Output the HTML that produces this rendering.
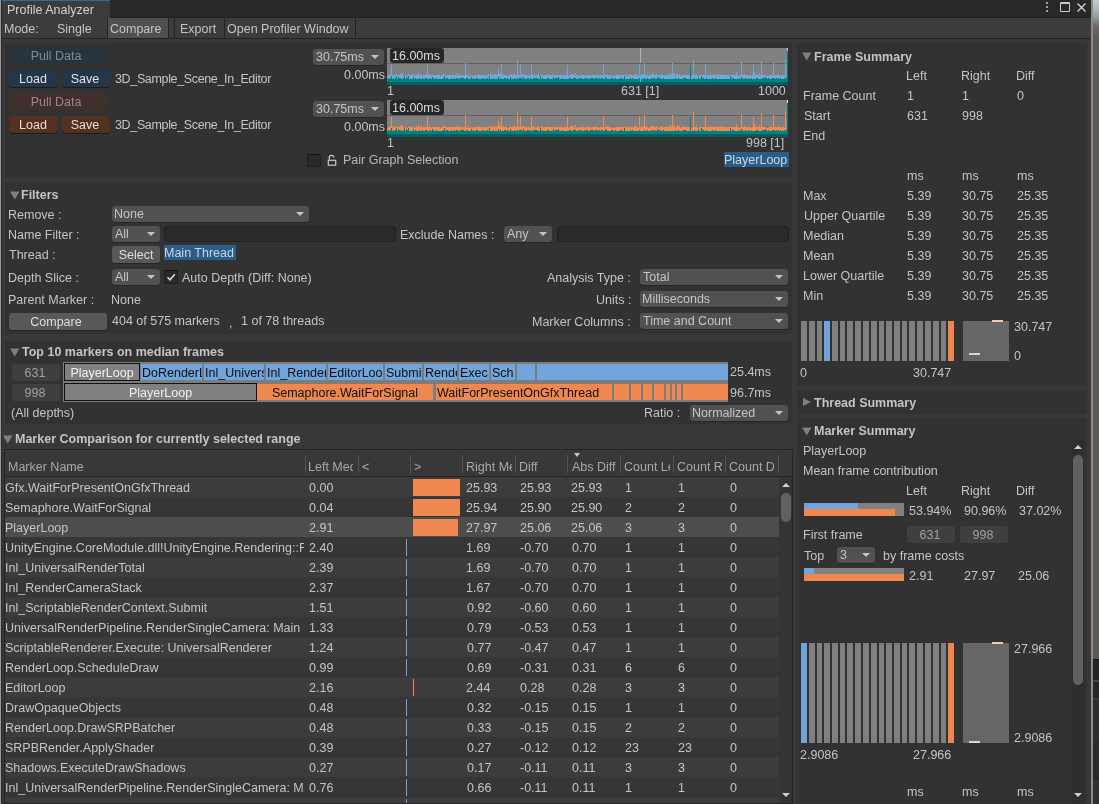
<!DOCTYPE html>
<html><head><meta charset="utf-8"><style>
html,body{margin:0;padding:0;}
body{width:1099px;height:804px;overflow:hidden;position:relative;background:#383838;font-family:"Liberation Sans",sans-serif;font-size:12.5px;}
body>div{position:absolute;}
.t{white-space:nowrap;line-height:14px;height:14px;will-change:transform;}
.seg{overflow:hidden;white-space:nowrap;box-sizing:border-box;will-change:transform;}
</style></head><body>
<div style="left:0px;top:0px;width:1091px;height:18px;background:#282828;"></div>
<div style="left:0px;top:17px;width:1091px;height:1px;background:#1f1f1f;"></div>
<div style="left:2px;top:0px;width:108px;height:18px;background:#3c3c3c;"></div>
<div style="left:2px;top:0px;width:108px;height:1px;background:#2f68a6;"></div>
<div class="t" style="left:6.97px;top:2.67px;color:#d2d2d2;">Profile Analyzer</div>
<div style="left:1046px;top:2px;width:2px;height:2px;background:#c8c8c8;border-radius:1px"></div>
<div style="left:1046px;top:6px;width:2px;height:2px;background:#c8c8c8;border-radius:1px"></div>
<div style="left:1046px;top:10px;width:2px;height:2px;background:#c8c8c8;border-radius:1px"></div>
<div style="left:1060px;top:2px;width:10px;height:10px;background:transparent;box-sizing:border-box;border:1px solid #c8c8c8;border-top-width:2px;border-radius:1px"></div>
<svg style="position:absolute;left:1076px;top:2px" width="11" height="11"><path d="M1.5 1.5L9.5 9.5M9.5 1.5L1.5 9.5" stroke="#d0d0d0" stroke-width="1.4"/></svg>
<div style="left:2px;top:18px;width:1089px;height:20px;background:#3c3c3c;"></div>
<div style="left:2px;top:38px;width:1089px;height:1px;background:#232323;"></div>
<div class="t" style="left:4.47px;top:21.67px;color:#c4c4c4;">Mode:</div>
<div class="t" style="left:57.43px;top:21.67px;color:#c4c4c4;">Single</div>
<div style="left:107px;top:18px;width:1px;height:20px;background:#232323;"></div>
<div style="left:108px;top:18px;width:60px;height:20px;background:#505050;"></div>
<div style="left:168px;top:18px;width:1px;height:20px;background:#232323;"></div>
<div class="t" style="left:110.37px;top:21.67px;color:#c4c4c4;">Compare</div>
<div style="left:174px;top:18px;width:1px;height:20px;background:#232323;"></div>
<div class="t" style="left:180.47px;top:21.67px;color:#c4c4c4;">Export</div>
<div style="left:224px;top:18px;width:1px;height:20px;background:#232323;"></div>
<div class="t" style="left:227.41px;top:21.67px;color:#c4c4c4;">Open Profiler Window</div>
<div style="left:355px;top:18px;width:1px;height:20px;background:#232323;"></div>
<div style="left:0px;top:0px;width:1px;height:804px;background:#9a9a9a;"></div>
<div style="left:1px;top:18px;width:1px;height:786px;background:#2a2a2a;"></div>
<div style="left:1091px;top:0px;width:2px;height:804px;background:#8a8a8a;"></div>
<div style="left:1093px;top:0px;width:6px;height:659px;background:linear-gradient(#bdcdd0 0px,#a8b6b8 10px,#8c9898 18px,#6a6663 27px,#5e5955 40px,#5c5853 659px);"></div>
<div style="left:1093px;top:659px;width:6px;height:1px;background:#151515;"></div>
<div style="left:1093px;top:660px;width:6px;height:20px;background:#252525;"></div>
<div style="left:1093px;top:680px;width:6px;height:2px;background:#444444;"></div>
<div style="left:1093px;top:682px;width:6px;height:16px;background:#262626;"></div>
<div style="left:1093px;top:698px;width:6px;height:2px;background:#3a3a3a;"></div>
<div style="left:1093px;top:700px;width:6px;height:42px;background:#2e2e2e;"></div>
<div style="left:1093px;top:742px;width:6px;height:38px;background:#2a2a2a;"></div>
<div style="left:1093px;top:780px;width:6px;height:24px;background:#303030;"></div>
<div style="left:5px;top:43px;width:787px;height:135px;background:#323232;"></div>
<div style="left:5px;top:182px;width:787px;height:152px;background:#323232;"></div>
<div style="left:5px;top:341px;width:787px;height:83px;background:#323232;"></div>
<div style="left:9px;top:47px;width:98px;height:17px;background:#29333d;border-radius:3px"></div>
<div class="t" style="left:-144.5px;width:400px;text-align:center;top:48.67px;color:#7d8995;">Pull Data</div>
<div style="left:9px;top:70px;width:48px;height:17px;background:#243649;border-radius:3px;box-shadow:0 1px 0 #1c1c1c"></div>
<div class="t" style="left:-167.0px;width:400px;text-align:center;top:71.67px;color:#e4e4e4;">Load</div>
<div style="left:62px;top:70px;width:48px;height:17px;background:#243649;border-radius:3px;box-shadow:0 1px 0 #1c1c1c"></div>
<div class="t" style="left:-115.4px;width:400px;text-align:center;top:71.67px;color:#e4e4e4;">Save</div>
<div class="t" style="left:115.02px;top:71.67px;color:#c4c4c4;letter-spacing:-0.35px">3D_Sample_Scene_In_Editor</div>
<div style="left:9px;top:93px;width:98px;height:17px;background:#412f29;border-radius:3px"></div>
<div class="t" style="left:-144.5px;width:400px;text-align:center;top:94.67px;color:#9a8983;">Pull Data</div>
<div style="left:9px;top:116px;width:48px;height:17px;background:#53301f;border-radius:3px;box-shadow:0 1px 0 #1c1c1c"></div>
<div class="t" style="left:-167.0px;width:400px;text-align:center;top:117.67px;color:#e8dcd6;">Load</div>
<div style="left:62px;top:116px;width:48px;height:17px;background:#53301f;border-radius:3px;box-shadow:0 1px 0 #1c1c1c"></div>
<div class="t" style="left:-115.4px;width:400px;text-align:center;top:117.67px;color:#e8dcd6;">Save</div>
<div class="t" style="left:115.02px;top:117.67px;color:#c4c4c4;letter-spacing:-0.35px">3D_Sample_Scene_In_Editor</div>
<div style="left:313px;top:49px;width:71px;height:16px;background:#515151;border-radius:3px;box-shadow:0 1px 0 #262626"></div>
<div class="t" style="left:316.02px;top:49.67px;color:#c4c4c4;">30.75ms</div>
<svg style="position:absolute;left:371px;top:55.0px" width="8" height="4"><polygon points="0,0 8,0 4.0,4" fill="#c4c4c4"/></svg>
<div class="t" style="right:714px;text-align:right;top:67.67px;color:#c4c4c4;">0.00ms</div>
<svg style="position:absolute;left:387px;top:48px" width="401" height="37" shape-rendering="crispEdges"><rect x="0" y="0" width="401" height="37" fill="#808080"/><rect x="0" y="15" width="401" height="1" fill="#606060"/><path d="M0 28h1V34h-1zM1 27h1V34h-1zM2 27h1V34h-1zM3 26h1V34h-1zM4 17h1V34h-1zM5 26h1V34h-1zM6 28h1V34h-1zM7 26h1V34h-1zM8 27h1V34h-1zM9 26h1V34h-1zM10 27h1V34h-1zM11 27h1V34h-1zM12 27h1V34h-1zM13 26h1V34h-1zM14 25h1V34h-1zM15 25h1V34h-1zM16 27h1V34h-1zM17 28h1V34h-1zM18 27h1V34h-1zM19 27h1V34h-1zM20 28h1V34h-1zM21 26h1V34h-1zM22 27h1V34h-1zM23 27h1V34h-1zM24 27h1V34h-1zM25 26h1V34h-1zM26 28h1V34h-1zM27 27h1V34h-1zM28 28h1V34h-1zM29 26h1V34h-1zM30 27h1V34h-1zM31 24h1V34h-1zM32 27h1V34h-1zM33 27h1V34h-1zM34 26h1V34h-1zM35 28h1V34h-1zM36 27h1V34h-1zM37 27h1V34h-1zM38 27h1V34h-1zM39 27h1V34h-1zM40 17h1V34h-1zM41 27h1V34h-1zM42 27h1V34h-1zM43 26h1V34h-1zM44 28h1V34h-1zM45 27h1V34h-1zM46 27h1V34h-1zM47 27h1V34h-1zM48 27h1V34h-1zM49 27h1V34h-1zM50 27h1V34h-1zM51 27h1V34h-1zM52 27h1V34h-1zM53 28h1V34h-1zM54 27h1V34h-1zM55 27h1V34h-1zM56 25h1V34h-1zM57 26h1V34h-1zM58 27h1V34h-1zM59 27h1V34h-1zM60 27h1V34h-1zM61 27h1V34h-1zM62 27h1V34h-1zM63 27h1V34h-1zM64 27h1V34h-1zM65 27h1V34h-1zM66 27h1V34h-1zM67 27h1V34h-1zM68 27h1V34h-1zM69 27h1V34h-1zM70 25h1V34h-1zM71 27h1V34h-1zM72 27h1V34h-1zM73 26h1V34h-1zM74 28h1V34h-1zM75 27h1V34h-1zM76 27h1V34h-1zM77 27h1V34h-1zM78 15h1V34h-1zM79 27h1V34h-1zM80 28h1V34h-1zM81 25h1V34h-1zM82 28h1V34h-1zM83 28h1V34h-1zM84 27h1V34h-1zM85 27h1V34h-1zM86 28h1V34h-1zM87 27h1V34h-1zM88 27h1V34h-1zM89 27h1V34h-1zM90 27h1V34h-1zM91 26h1V34h-1zM92 27h1V34h-1zM93 27h1V34h-1zM94 28h1V34h-1zM95 27h1V34h-1zM96 27h1V34h-1zM97 27h1V34h-1zM98 28h1V34h-1zM99 27h1V34h-1zM100 27h1V34h-1zM101 26h1V34h-1zM102 27h1V34h-1zM103 25h1V34h-1zM104 27h1V34h-1zM105 27h1V34h-1zM106 26h1V34h-1zM107 27h1V34h-1zM108 26h1V34h-1zM109 27h1V34h-1zM110 26h1V34h-1zM111 21h1V34h-1zM112 26h1V34h-1zM113 25h1V34h-1zM114 16h1V34h-1zM115 27h1V34h-1zM116 26h1V34h-1zM117 27h1V34h-1zM118 27h1V34h-1zM119 27h1V34h-1zM120 28h1V34h-1zM121 28h1V34h-1zM122 27h1V34h-1zM123 26h1V34h-1zM124 27h1V34h-1zM125 27h1V34h-1zM126 26h1V34h-1zM127 26h1V34h-1zM128 27h1V34h-1zM129 27h1V34h-1zM130 12h1V34h-1zM131 26h1V34h-1zM132 27h1V34h-1zM133 16h1V34h-1zM134 27h1V34h-1zM135 26h1V34h-1zM136 26h1V34h-1zM137 27h1V34h-1zM138 27h1V34h-1zM139 27h1V34h-1zM140 27h1V34h-1zM141 27h1V34h-1zM142 28h1V34h-1zM143 27h1V34h-1zM144 17h1V34h-1zM145 27h1V34h-1zM146 27h1V34h-1zM147 26h1V34h-1zM148 28h1V34h-1zM149 27h1V34h-1zM150 27h1V34h-1zM151 26h1V34h-1zM152 28h1V34h-1zM153 27h1V34h-1zM154 26h1V34h-1zM155 27h1V34h-1zM156 27h1V34h-1zM157 27h1V34h-1zM158 27h1V34h-1zM159 27h1V34h-1zM160 27h1V34h-1zM161 26h1V34h-1zM162 27h1V34h-1zM163 27h1V34h-1zM164 27h1V34h-1zM165 26h1V34h-1zM166 28h1V34h-1zM167 27h1V34h-1zM168 27h1V34h-1zM169 27h1V34h-1zM170 27h1V34h-1zM171 27h1V34h-1zM172 27h1V34h-1zM173 27h1V34h-1zM174 27h1V34h-1zM175 27h1V34h-1zM176 28h1V34h-1zM177 27h1V34h-1zM178 27h1V34h-1zM179 27h1V34h-1zM180 17h1V34h-1zM181 28h1V34h-1zM182 27h1V34h-1zM183 27h1V34h-1zM184 26h1V34h-1zM185 26h1V34h-1zM186 26h1V34h-1zM187 28h1V34h-1zM188 25h1V34h-1zM189 27h1V34h-1zM190 28h1V34h-1zM191 27h1V34h-1zM192 27h1V34h-1zM193 28h1V34h-1zM194 26h1V34h-1zM195 27h1V34h-1zM196 27h1V34h-1zM197 27h1V34h-1zM198 28h1V34h-1zM199 27h1V34h-1zM200 27h1V34h-1zM201 27h1V34h-1zM202 27h1V34h-1zM203 27h1V34h-1zM204 28h1V34h-1zM205 27h1V34h-1zM206 27h1V34h-1zM207 27h1V34h-1zM208 27h1V34h-1zM209 27h1V34h-1zM210 27h1V34h-1zM211 27h1V34h-1zM212 28h1V34h-1zM213 27h1V34h-1zM214 27h1V34h-1zM215 27h1V34h-1zM216 16h1V34h-1zM217 27h1V34h-1zM218 27h1V34h-1zM219 26h1V34h-1zM220 27h1V34h-1zM221 27h1V34h-1zM222 27h1V34h-1zM223 27h1V34h-1zM224 28h1V34h-1zM225 27h1V34h-1zM226 28h1V34h-1zM227 28h1V34h-1zM228 27h1V34h-1zM229 27h1V34h-1zM230 26h1V34h-1zM231 27h1V34h-1zM232 27h1V34h-1zM233 27h1V34h-1zM234 27h1V34h-1zM235 27h1V34h-1zM236 27h1V34h-1zM237 27h1V34h-1zM238 27h1V34h-1zM239 28h1V34h-1zM240 26h1V34h-1zM241 28h1V34h-1zM242 26h1V34h-1zM243 27h1V34h-1zM244 27h1V34h-1zM245 27h1V34h-1zM246 28h1V34h-1zM247 26h1V34h-1zM248 26h1V34h-1zM249 27h1V34h-1zM250 27h1V34h-1zM251 28h1V34h-1zM252 16h1V34h-1zM253 27h1V34h-1zM254 26h1V34h-1zM255 27h1V34h-1zM256 26h1V34h-1zM257 15h1V34h-1zM258 27h1V34h-1zM259 26h1V34h-1zM260 27h1V34h-1zM261 28h1V34h-1zM262 27h1V34h-1zM263 27h1V34h-1zM264 26h1V34h-1zM265 26h1V34h-1zM266 26h1V34h-1zM267 27h1V34h-1zM268 27h1V34h-1zM269 26h1V34h-1zM270 27h1V34h-1zM271 28h1V34h-1zM272 27h1V34h-1zM273 27h1V34h-1zM274 26h1V34h-1zM275 27h1V34h-1zM276 27h1V34h-1zM277 27h1V34h-1zM278 27h1V34h-1zM279 27h1V34h-1zM280 27h1V34h-1zM281 27h1V34h-1zM282 26h1V34h-1zM283 25h1V34h-1zM284 27h1V34h-1zM285 15h1V34h-1zM286 26h1V34h-1zM287 25h1V34h-1zM288 28h1V34h-1zM289 27h1V34h-1zM290 25h1V34h-1zM291 27h1V34h-1zM292 26h1V34h-1zM293 28h1V34h-1zM294 27h1V34h-1zM295 27h1V34h-1zM296 26h1V34h-1zM297 27h1V34h-1zM298 27h1V34h-1zM299 27h1V34h-1zM300 27h1V34h-1zM301 27h1V34h-1zM302 27h1V34h-1zM303 28h1V34h-1zM304 27h1V34h-1zM305 28h1V34h-1zM306 12h1V34h-1zM307 27h1V34h-1zM308 27h1V34h-1zM309 26h1V34h-1zM310 28h1V34h-1zM311 28h1V34h-1zM312 27h1V34h-1zM313 27h1V34h-1zM314 27h1V34h-1zM315 27h1V34h-1zM316 27h1V34h-1zM317 27h1V34h-1zM318 16h1V34h-1zM319 27h1V34h-1zM320 27h1V34h-1zM321 27h1V34h-1zM322 27h1V34h-1zM323 26h1V34h-1zM324 27h1V34h-1zM325 27h1V34h-1zM326 26h1V34h-1zM327 27h1V34h-1zM328 27h1V34h-1zM329 27h1V34h-1zM330 27h1V34h-1zM331 26h1V34h-1zM332 27h1V34h-1zM333 26h1V34h-1zM334 27h1V34h-1zM335 27h1V34h-1zM336 26h1V34h-1zM337 27h1V34h-1zM338 27h1V34h-1zM339 27h1V34h-1zM340 27h1V34h-1zM341 27h1V34h-1zM342 27h1V34h-1zM343 27h1V34h-1zM344 27h1V34h-1zM345 27h1V34h-1zM346 27h1V34h-1zM347 27h1V34h-1zM348 27h1V34h-1zM349 24h1V34h-1zM350 27h1V34h-1zM351 27h1V34h-1zM352 28h1V34h-1zM353 27h1V34h-1zM354 14h1V34h-1zM355 27h1V34h-1zM356 27h1V34h-1zM357 26h1V34h-1zM358 27h1V34h-1zM359 27h1V34h-1zM360 27h1V34h-1zM361 27h1V34h-1zM362 27h1V34h-1zM363 27h1V34h-1zM364 28h1V34h-1zM365 27h1V34h-1zM366 17h1V34h-1zM367 24h1V34h-1zM368 27h1V34h-1zM369 26h1V34h-1zM370 27h1V34h-1zM371 27h1V34h-1zM372 25h1V34h-1zM373 27h1V34h-1zM374 13h1V34h-1zM375 27h1V34h-1zM376 27h1V34h-1zM377 27h1V34h-1zM378 27h1V34h-1zM379 28h1V34h-1zM380 28h1V34h-1zM381 28h1V34h-1zM382 27h1V34h-1zM383 27h1V34h-1zM384 27h1V34h-1zM385 27h1V34h-1zM386 15h1V34h-1zM387 27h1V34h-1zM388 27h1V34h-1zM389 27h1V34h-1zM390 27h1V34h-1zM391 26h1V34h-1zM392 27h1V34h-1zM393 28h1V34h-1zM394 27h1V34h-1zM395 27h1V34h-1zM396 27h1V34h-1zM397 28h1V34h-1zM398 11h1V34h-1zM399 27h1V34h-1zM400 0h1V34h-1z" fill="#70a8dc"/><path d="M0 31h1V34h-1zM1 30h1V34h-1zM2 31h1V34h-1zM3 30h1V34h-1zM4 28h1V34h-1zM5 31h1V34h-1zM6 30h1V34h-1zM7 31h1V34h-1zM8 30h1V34h-1zM9 28h1V34h-1zM10 31h1V34h-1zM11 29h1V34h-1zM12 30h1V34h-1zM13 30h1V34h-1zM14 31h1V34h-1zM15 31h1V34h-1zM16 30h1V34h-1zM17 28h1V34h-1zM18 31h1V34h-1zM19 29h1V34h-1zM20 30h1V34h-1zM21 28h1V34h-1zM22 31h1V34h-1zM23 31h1V34h-1zM24 31h1V34h-1zM25 31h1V34h-1zM26 29h1V34h-1zM27 31h1V34h-1zM28 30h1V34h-1zM29 31h1V34h-1zM30 31h1V34h-1zM31 31h1V34h-1zM32 30h1V34h-1zM33 31h1V34h-1zM34 31h1V34h-1zM35 30h1V34h-1zM36 31h1V34h-1zM37 31h1V34h-1zM38 30h1V34h-1zM39 30h1V34h-1zM40 31h1V34h-1zM41 31h1V34h-1zM42 31h1V34h-1zM43 30h1V34h-1zM44 31h1V34h-1zM45 29h1V34h-1zM46 30h1V34h-1zM47 31h1V34h-1zM48 31h1V34h-1zM49 30h1V34h-1zM50 31h1V34h-1zM51 31h1V34h-1zM52 31h1V34h-1zM53 31h1V34h-1zM54 31h1V34h-1zM55 31h1V34h-1zM56 30h1V34h-1zM57 28h1V34h-1zM58 31h1V34h-1zM59 30h1V34h-1zM60 30h1V34h-1zM61 31h1V34h-1zM62 31h1V34h-1zM63 31h1V34h-1zM64 30h1V34h-1zM65 31h1V34h-1zM66 31h1V34h-1zM67 30h1V34h-1zM68 31h1V34h-1zM69 30h1V34h-1zM70 30h1V34h-1zM71 31h1V34h-1zM72 31h1V34h-1zM73 30h1V34h-1zM74 30h1V34h-1zM75 30h1V34h-1zM76 30h1V34h-1zM77 31h1V34h-1zM78 31h1V34h-1zM79 30h1V34h-1zM80 30h1V34h-1zM81 31h1V34h-1zM82 31h1V34h-1zM83 31h1V34h-1zM84 29h1V34h-1zM85 31h1V34h-1zM86 30h1V34h-1zM87 31h1V34h-1zM88 31h1V34h-1zM89 30h1V34h-1zM90 30h1V34h-1zM91 31h1V34h-1zM92 31h1V34h-1zM93 31h1V34h-1zM94 31h1V34h-1zM95 30h1V34h-1zM96 31h1V34h-1zM97 30h1V34h-1zM98 31h1V34h-1zM99 31h1V34h-1zM100 30h1V34h-1zM101 31h1V34h-1zM102 28h1V34h-1zM103 31h1V34h-1zM104 31h1V34h-1zM105 31h1V34h-1zM106 30h1V34h-1zM107 31h1V34h-1zM108 31h1V34h-1zM109 31h1V34h-1zM110 31h1V34h-1zM111 29h1V34h-1zM112 31h1V34h-1zM113 30h1V34h-1zM114 31h1V34h-1zM115 31h1V34h-1zM116 31h1V34h-1zM117 30h1V34h-1zM118 30h1V34h-1zM119 31h1V34h-1zM120 30h1V34h-1zM121 31h1V34h-1zM122 31h1V34h-1zM123 29h1V34h-1zM124 31h1V34h-1zM125 31h1V34h-1zM126 31h1V34h-1zM127 30h1V34h-1zM128 31h1V34h-1zM129 31h1V34h-1zM130 30h1V34h-1zM131 31h1V34h-1zM132 30h1V34h-1zM133 30h1V34h-1zM134 30h1V34h-1zM135 31h1V34h-1zM136 29h1V34h-1zM137 31h1V34h-1zM138 31h1V34h-1zM139 31h1V34h-1zM140 30h1V34h-1zM141 30h1V34h-1zM142 31h1V34h-1zM143 30h1V34h-1zM144 31h1V34h-1zM145 31h1V34h-1zM146 30h1V34h-1zM147 30h1V34h-1zM148 30h1V34h-1zM149 30h1V34h-1zM150 30h1V34h-1zM151 31h1V34h-1zM152 31h1V34h-1zM153 28h1V34h-1zM154 31h1V34h-1zM155 30h1V34h-1zM156 31h1V34h-1zM157 31h1V34h-1zM158 31h1V34h-1zM159 31h1V34h-1zM160 30h1V34h-1zM161 30h1V34h-1zM162 31h1V34h-1zM163 31h1V34h-1zM164 31h1V34h-1zM165 31h1V34h-1zM166 29h1V34h-1zM167 31h1V34h-1zM168 30h1V34h-1zM169 30h1V34h-1zM170 30h1V34h-1zM171 29h1V34h-1zM172 31h1V34h-1zM173 31h1V34h-1zM174 31h1V34h-1zM175 30h1V34h-1zM176 31h1V34h-1zM177 31h1V34h-1zM178 31h1V34h-1zM179 31h1V34h-1zM180 31h1V34h-1zM181 31h1V34h-1zM182 30h1V34h-1zM183 30h1V34h-1zM184 31h1V34h-1zM185 31h1V34h-1zM186 30h1V34h-1zM187 30h1V34h-1zM188 30h1V34h-1zM189 31h1V34h-1zM190 31h1V34h-1zM191 30h1V34h-1zM192 31h1V34h-1zM193 30h1V34h-1zM194 30h1V34h-1zM195 31h1V34h-1zM196 31h1V34h-1zM197 30h1V34h-1zM198 31h1V34h-1zM199 30h1V34h-1zM200 30h1V34h-1zM201 31h1V34h-1zM202 31h1V34h-1zM203 30h1V34h-1zM204 30h1V34h-1zM205 30h1V34h-1zM206 30h1V34h-1zM207 31h1V34h-1zM208 30h1V34h-1zM209 30h1V34h-1zM210 30h1V34h-1zM211 31h1V34h-1zM212 30h1V34h-1zM213 31h1V34h-1zM214 30h1V34h-1zM215 30h1V34h-1zM216 31h1V34h-1zM217 31h1V34h-1zM218 29h1V34h-1zM219 30h1V34h-1zM220 31h1V34h-1zM221 31h1V34h-1zM222 31h1V34h-1zM223 31h1V34h-1zM224 30h1V34h-1zM225 30h1V34h-1zM226 31h1V34h-1zM227 31h1V34h-1zM228 30h1V34h-1zM229 31h1V34h-1zM230 31h1V34h-1zM231 31h1V34h-1zM232 31h1V34h-1zM233 30h1V34h-1zM234 30h1V34h-1zM235 31h1V34h-1zM236 31h1V34h-1zM237 28h1V34h-1zM238 31h1V34h-1zM239 31h1V34h-1zM240 31h1V34h-1zM241 31h1V34h-1zM242 31h1V34h-1zM243 30h1V34h-1zM244 31h1V34h-1zM245 30h1V34h-1zM246 31h1V34h-1zM247 31h1V34h-1zM248 31h1V34h-1zM249 31h1V34h-1zM250 31h1V34h-1zM251 31h1V34h-1zM252 30h1V34h-1zM253 31h1V34h-1zM254 31h1V34h-1zM255 31h1V34h-1zM256 31h1V34h-1zM257 30h1V34h-1zM258 31h1V34h-1zM259 31h1V34h-1zM260 30h1V34h-1zM261 31h1V34h-1zM262 31h1V34h-1zM263 31h1V34h-1zM264 30h1V34h-1zM265 31h1V34h-1zM266 30h1V34h-1zM267 30h1V34h-1zM268 31h1V34h-1zM269 31h1V34h-1zM270 30h1V34h-1zM271 29h1V34h-1zM272 31h1V34h-1zM273 30h1V34h-1zM274 31h1V34h-1zM275 31h1V34h-1zM276 30h1V34h-1zM277 31h1V34h-1zM278 31h1V34h-1zM279 31h1V34h-1zM280 31h1V34h-1zM281 31h1V34h-1zM282 31h1V34h-1zM283 31h1V34h-1zM284 31h1V34h-1zM285 31h1V34h-1zM286 31h1V34h-1zM287 31h1V34h-1zM288 30h1V34h-1zM289 31h1V34h-1zM290 31h1V34h-1zM291 30h1V34h-1zM292 31h1V34h-1zM293 31h1V34h-1zM294 31h1V34h-1zM295 31h1V34h-1zM296 30h1V34h-1zM297 30h1V34h-1zM298 30h1V34h-1zM299 31h1V34h-1zM300 31h1V34h-1zM301 31h1V34h-1zM302 31h1V34h-1zM303 17h1V34h-1zM304 31h1V34h-1zM305 31h1V34h-1zM306 31h1V34h-1zM307 30h1V34h-1zM308 31h1V34h-1zM309 31h1V34h-1zM310 31h1V34h-1zM311 29h1V34h-1zM312 31h1V34h-1zM313 31h1V34h-1zM314 28h1V34h-1zM315 30h1V34h-1zM316 30h1V34h-1zM317 31h1V34h-1zM318 31h1V34h-1zM319 30h1V34h-1zM320 31h1V34h-1zM321 31h1V34h-1zM322 31h1V34h-1zM323 31h1V34h-1zM324 31h1V34h-1zM325 30h1V34h-1zM326 31h1V34h-1zM327 31h1V34h-1zM328 30h1V34h-1zM329 31h1V34h-1zM330 31h1V34h-1zM331 31h1V34h-1zM332 31h1V34h-1zM333 31h1V34h-1zM334 31h1V34h-1zM335 31h1V34h-1zM336 31h1V34h-1zM337 31h1V34h-1zM338 31h1V34h-1zM339 31h1V34h-1zM340 31h1V34h-1zM341 31h1V34h-1zM342 31h1V34h-1zM343 28h1V34h-1zM344 31h1V34h-1zM345 30h1V34h-1zM346 30h1V34h-1zM347 31h1V34h-1zM348 31h1V34h-1zM349 31h1V34h-1zM350 31h1V34h-1zM351 31h1V34h-1zM352 30h1V34h-1zM353 31h1V34h-1zM354 29h1V34h-1zM355 30h1V34h-1zM356 31h1V34h-1zM357 31h1V34h-1zM358 30h1V34h-1zM359 31h1V34h-1zM360 31h1V34h-1zM361 30h1V34h-1zM362 31h1V34h-1zM363 31h1V34h-1zM364 30h1V34h-1zM365 31h1V34h-1zM366 31h1V34h-1zM367 31h1V34h-1zM368 31h1V34h-1zM369 30h1V34h-1zM370 30h1V34h-1zM371 31h1V34h-1zM372 31h1V34h-1zM373 31h1V34h-1zM374 31h1V34h-1zM375 30h1V34h-1zM376 30h1V34h-1zM377 30h1V34h-1zM378 29h1V34h-1zM379 30h1V34h-1zM380 31h1V34h-1zM381 30h1V34h-1zM382 31h1V34h-1zM383 31h1V34h-1zM384 31h1V34h-1zM385 30h1V34h-1zM386 30h1V34h-1zM387 30h1V34h-1zM388 31h1V34h-1zM389 30h1V34h-1zM390 31h1V34h-1zM391 30h1V34h-1zM392 31h1V34h-1zM393 30h1V34h-1zM394 31h1V34h-1zM395 31h1V34h-1zM396 31h1V34h-1zM397 30h1V34h-1zM398 31h1V34h-1zM399 29h1V34h-1zM400 3h1V34h-1z" fill="#008080"/><rect x="0" y="34" width="401" height="3" fill="#005f5f"/><rect x="400" y="0" width="1" height="3" fill="#9cc4ec"/><rect x="253" y="0" width="1" height="15" fill="#b0b0b0"/><rect x="253" y="27" width="1" height="7" fill="#00e0e0"/></svg>
<div style="left:390px;top:48px;width:54px;height:15px;background:#262626;border-radius:3px"></div>
<div class="t" style="left:392.05px;top:48.67px;color:#dcdcdc;">16.00ms</div>
<div class="t" style="left:386.55px;top:83.67px;color:#c4c4c4;">1</div>
<div class="t" style="left:620.87px;top:83.67px;color:#c4c4c4;">631 [1]</div>
<div class="t" style="right:313px;text-align:right;top:83.67px;color:#c4c4c4;">1000</div>
<div style="left:313px;top:101px;width:71px;height:16px;background:#515151;border-radius:3px;box-shadow:0 1px 0 #262626"></div>
<div class="t" style="left:316.02px;top:101.67px;color:#c4c4c4;">30.75ms</div>
<svg style="position:absolute;left:371px;top:107.0px" width="8" height="4"><polygon points="0,0 8,0 4.0,4" fill="#c4c4c4"/></svg>
<div class="t" style="right:714px;text-align:right;top:119.67px;color:#c4c4c4;">0.00ms</div>
<svg style="position:absolute;left:387px;top:100px" width="401" height="37" shape-rendering="crispEdges"><rect x="0" y="0" width="401" height="37" fill="#808080"/><rect x="0" y="15" width="401" height="1" fill="#606060"/><path d="M0 28h1V34h-1zM1 27h1V34h-1zM2 27h1V34h-1zM3 26h1V34h-1zM4 17h1V34h-1zM5 26h1V34h-1zM6 28h1V34h-1zM7 26h1V34h-1zM8 27h1V34h-1zM9 26h1V34h-1zM10 27h1V34h-1zM11 27h1V34h-1zM12 27h1V34h-1zM13 26h1V34h-1zM14 25h1V34h-1zM15 25h1V34h-1zM16 27h1V34h-1zM17 28h1V34h-1zM18 27h1V34h-1zM19 27h1V34h-1zM20 28h1V34h-1zM21 26h1V34h-1zM22 27h1V34h-1zM23 27h1V34h-1zM24 27h1V34h-1zM25 26h1V34h-1zM26 28h1V34h-1zM27 27h1V34h-1zM28 28h1V34h-1zM29 26h1V34h-1zM30 27h1V34h-1zM31 24h1V34h-1zM32 27h1V34h-1zM33 27h1V34h-1zM34 26h1V34h-1zM35 28h1V34h-1zM36 27h1V34h-1zM37 27h1V34h-1zM38 27h1V34h-1zM39 27h1V34h-1zM40 17h1V34h-1zM41 27h1V34h-1zM42 27h1V34h-1zM43 26h1V34h-1zM44 28h1V34h-1zM45 27h1V34h-1zM46 27h1V34h-1zM47 27h1V34h-1zM48 27h1V34h-1zM49 27h1V34h-1zM50 27h1V34h-1zM51 27h1V34h-1zM52 27h1V34h-1zM53 28h1V34h-1zM54 27h1V34h-1zM55 27h1V34h-1zM56 25h1V34h-1zM57 26h1V34h-1zM58 27h1V34h-1zM59 27h1V34h-1zM60 27h1V34h-1zM61 27h1V34h-1zM62 27h1V34h-1zM63 27h1V34h-1zM64 27h1V34h-1zM65 27h1V34h-1zM66 27h1V34h-1zM67 27h1V34h-1zM68 27h1V34h-1zM69 27h1V34h-1zM70 25h1V34h-1zM71 27h1V34h-1zM72 27h1V34h-1zM73 26h1V34h-1zM74 28h1V34h-1zM75 27h1V34h-1zM76 27h1V34h-1zM77 27h1V34h-1zM78 15h1V34h-1zM79 27h1V34h-1zM80 28h1V34h-1zM81 25h1V34h-1zM82 28h1V34h-1zM83 28h1V34h-1zM84 27h1V34h-1zM85 27h1V34h-1zM86 28h1V34h-1zM87 27h1V34h-1zM88 27h1V34h-1zM89 27h1V34h-1zM90 27h1V34h-1zM91 26h1V34h-1zM92 27h1V34h-1zM93 27h1V34h-1zM94 28h1V34h-1zM95 27h1V34h-1zM96 27h1V34h-1zM97 27h1V34h-1zM98 28h1V34h-1zM99 27h1V34h-1zM100 27h1V34h-1zM101 26h1V34h-1zM102 27h1V34h-1zM103 25h1V34h-1zM104 27h1V34h-1zM105 27h1V34h-1zM106 26h1V34h-1zM107 27h1V34h-1zM108 26h1V34h-1zM109 27h1V34h-1zM110 26h1V34h-1zM111 21h1V34h-1zM112 26h1V34h-1zM113 25h1V34h-1zM114 16h1V34h-1zM115 27h1V34h-1zM116 26h1V34h-1zM117 27h1V34h-1zM118 27h1V34h-1zM119 27h1V34h-1zM120 28h1V34h-1zM121 28h1V34h-1zM122 27h1V34h-1zM123 26h1V34h-1zM124 27h1V34h-1zM125 27h1V34h-1zM126 26h1V34h-1zM127 26h1V34h-1zM128 27h1V34h-1zM129 27h1V34h-1zM130 12h1V34h-1zM131 26h1V34h-1zM132 27h1V34h-1zM133 16h1V34h-1zM134 27h1V34h-1zM135 26h1V34h-1zM136 26h1V34h-1zM137 27h1V34h-1zM138 27h1V34h-1zM139 27h1V34h-1zM140 27h1V34h-1zM141 27h1V34h-1zM142 28h1V34h-1zM143 27h1V34h-1zM144 17h1V34h-1zM145 27h1V34h-1zM146 27h1V34h-1zM147 26h1V34h-1zM148 28h1V34h-1zM149 27h1V34h-1zM150 27h1V34h-1zM151 26h1V34h-1zM152 28h1V34h-1zM153 27h1V34h-1zM154 26h1V34h-1zM155 27h1V34h-1zM156 27h1V34h-1zM157 27h1V34h-1zM158 27h1V34h-1zM159 27h1V34h-1zM160 27h1V34h-1zM161 26h1V34h-1zM162 27h1V34h-1zM163 27h1V34h-1zM164 27h1V34h-1zM165 26h1V34h-1zM166 28h1V34h-1zM167 27h1V34h-1zM168 27h1V34h-1zM169 27h1V34h-1zM170 27h1V34h-1zM171 27h1V34h-1zM172 27h1V34h-1zM173 27h1V34h-1zM174 27h1V34h-1zM175 27h1V34h-1zM176 28h1V34h-1zM177 27h1V34h-1zM178 27h1V34h-1zM179 27h1V34h-1zM180 17h1V34h-1zM181 28h1V34h-1zM182 27h1V34h-1zM183 27h1V34h-1zM184 26h1V34h-1zM185 26h1V34h-1zM186 26h1V34h-1zM187 28h1V34h-1zM188 25h1V34h-1zM189 27h1V34h-1zM190 28h1V34h-1zM191 27h1V34h-1zM192 27h1V34h-1zM193 28h1V34h-1zM194 26h1V34h-1zM195 27h1V34h-1zM196 27h1V34h-1zM197 27h1V34h-1zM198 28h1V34h-1zM199 27h1V34h-1zM200 27h1V34h-1zM201 27h1V34h-1zM202 27h1V34h-1zM203 27h1V34h-1zM204 28h1V34h-1zM205 27h1V34h-1zM206 27h1V34h-1zM207 27h1V34h-1zM208 27h1V34h-1zM209 27h1V34h-1zM210 27h1V34h-1zM211 27h1V34h-1zM212 28h1V34h-1zM213 27h1V34h-1zM214 27h1V34h-1zM215 27h1V34h-1zM216 16h1V34h-1zM217 27h1V34h-1zM218 27h1V34h-1zM219 26h1V34h-1zM220 27h1V34h-1zM221 27h1V34h-1zM222 27h1V34h-1zM223 27h1V34h-1zM224 28h1V34h-1zM225 27h1V34h-1zM226 28h1V34h-1zM227 28h1V34h-1zM228 27h1V34h-1zM229 27h1V34h-1zM230 26h1V34h-1zM231 27h1V34h-1zM232 27h1V34h-1zM233 27h1V34h-1zM234 27h1V34h-1zM235 27h1V34h-1zM236 27h1V34h-1zM237 27h1V34h-1zM238 27h1V34h-1zM239 28h1V34h-1zM240 26h1V34h-1zM241 28h1V34h-1zM242 26h1V34h-1zM243 27h1V34h-1zM244 27h1V34h-1zM245 27h1V34h-1zM246 28h1V34h-1zM247 26h1V34h-1zM248 26h1V34h-1zM249 27h1V34h-1zM250 27h1V34h-1zM251 28h1V34h-1zM252 16h1V34h-1zM253 27h1V34h-1zM254 26h1V34h-1zM255 27h1V34h-1zM256 26h1V34h-1zM257 15h1V34h-1zM258 27h1V34h-1zM259 26h1V34h-1zM260 27h1V34h-1zM261 28h1V34h-1zM262 27h1V34h-1zM263 27h1V34h-1zM264 26h1V34h-1zM265 26h1V34h-1zM266 26h1V34h-1zM267 27h1V34h-1zM268 27h1V34h-1zM269 26h1V34h-1zM270 27h1V34h-1zM271 28h1V34h-1zM272 27h1V34h-1zM273 27h1V34h-1zM274 26h1V34h-1zM275 27h1V34h-1zM276 27h1V34h-1zM277 27h1V34h-1zM278 27h1V34h-1zM279 27h1V34h-1zM280 27h1V34h-1zM281 27h1V34h-1zM282 26h1V34h-1zM283 25h1V34h-1zM284 27h1V34h-1zM285 15h1V34h-1zM286 26h1V34h-1zM287 25h1V34h-1zM288 28h1V34h-1zM289 27h1V34h-1zM290 25h1V34h-1zM291 27h1V34h-1zM292 26h1V34h-1zM293 28h1V34h-1zM294 27h1V34h-1zM295 27h1V34h-1zM296 26h1V34h-1zM297 27h1V34h-1zM298 27h1V34h-1zM299 27h1V34h-1zM300 27h1V34h-1zM301 27h1V34h-1zM302 27h1V34h-1zM303 28h1V34h-1zM304 27h1V34h-1zM305 28h1V34h-1zM306 12h1V34h-1zM307 27h1V34h-1zM308 27h1V34h-1zM309 26h1V34h-1zM310 28h1V34h-1zM311 28h1V34h-1zM312 27h1V34h-1zM313 27h1V34h-1zM314 27h1V34h-1zM315 27h1V34h-1zM316 27h1V34h-1zM317 27h1V34h-1zM318 16h1V34h-1zM319 27h1V34h-1zM320 27h1V34h-1zM321 27h1V34h-1zM322 27h1V34h-1zM323 26h1V34h-1zM324 27h1V34h-1zM325 27h1V34h-1zM326 26h1V34h-1zM327 27h1V34h-1zM328 27h1V34h-1zM329 27h1V34h-1zM330 27h1V34h-1zM331 26h1V34h-1zM332 27h1V34h-1zM333 26h1V34h-1zM334 27h1V34h-1zM335 27h1V34h-1zM336 26h1V34h-1zM337 27h1V34h-1zM338 27h1V34h-1zM339 27h1V34h-1zM340 27h1V34h-1zM341 27h1V34h-1zM342 27h1V34h-1zM343 27h1V34h-1zM344 27h1V34h-1zM345 27h1V34h-1zM346 27h1V34h-1zM347 27h1V34h-1zM348 27h1V34h-1zM349 24h1V34h-1zM350 27h1V34h-1zM351 27h1V34h-1zM352 28h1V34h-1zM353 27h1V34h-1zM354 14h1V34h-1zM355 27h1V34h-1zM356 27h1V34h-1zM357 26h1V34h-1zM358 27h1V34h-1zM359 27h1V34h-1zM360 27h1V34h-1zM361 27h1V34h-1zM362 27h1V34h-1zM363 27h1V34h-1zM364 28h1V34h-1zM365 27h1V34h-1zM366 17h1V34h-1zM367 24h1V34h-1zM368 27h1V34h-1zM369 26h1V34h-1zM370 27h1V34h-1zM371 27h1V34h-1zM372 25h1V34h-1zM373 27h1V34h-1zM374 13h1V34h-1zM375 27h1V34h-1zM376 27h1V34h-1zM377 27h1V34h-1zM378 27h1V34h-1zM379 28h1V34h-1zM380 28h1V34h-1zM381 28h1V34h-1zM382 27h1V34h-1zM383 27h1V34h-1zM384 27h1V34h-1zM385 27h1V34h-1zM386 15h1V34h-1zM387 27h1V34h-1zM388 27h1V34h-1zM389 27h1V34h-1zM390 27h1V34h-1zM391 26h1V34h-1zM392 27h1V34h-1zM393 28h1V34h-1zM394 27h1V34h-1zM395 27h1V34h-1zM396 27h1V34h-1zM397 28h1V34h-1zM398 11h1V34h-1zM399 27h1V34h-1zM400 0h1V34h-1z" fill="#ee8a52"/><path d="M0 31h1V34h-1zM1 30h1V34h-1zM2 31h1V34h-1zM3 30h1V34h-1zM4 28h1V34h-1zM5 31h1V34h-1zM6 30h1V34h-1zM7 31h1V34h-1zM8 30h1V34h-1zM9 28h1V34h-1zM10 31h1V34h-1zM11 29h1V34h-1zM12 30h1V34h-1zM13 30h1V34h-1zM14 31h1V34h-1zM15 31h1V34h-1zM16 30h1V34h-1zM17 28h1V34h-1zM18 31h1V34h-1zM19 29h1V34h-1zM20 30h1V34h-1zM21 28h1V34h-1zM22 31h1V34h-1zM23 31h1V34h-1zM24 31h1V34h-1zM25 31h1V34h-1zM26 29h1V34h-1zM27 31h1V34h-1zM28 30h1V34h-1zM29 31h1V34h-1zM30 31h1V34h-1zM31 31h1V34h-1zM32 30h1V34h-1zM33 31h1V34h-1zM34 31h1V34h-1zM35 30h1V34h-1zM36 31h1V34h-1zM37 31h1V34h-1zM38 30h1V34h-1zM39 30h1V34h-1zM40 31h1V34h-1zM41 31h1V34h-1zM42 31h1V34h-1zM43 30h1V34h-1zM44 31h1V34h-1zM45 29h1V34h-1zM46 30h1V34h-1zM47 31h1V34h-1zM48 31h1V34h-1zM49 30h1V34h-1zM50 31h1V34h-1zM51 31h1V34h-1zM52 31h1V34h-1zM53 31h1V34h-1zM54 31h1V34h-1zM55 31h1V34h-1zM56 30h1V34h-1zM57 28h1V34h-1zM58 31h1V34h-1zM59 30h1V34h-1zM60 30h1V34h-1zM61 31h1V34h-1zM62 31h1V34h-1zM63 31h1V34h-1zM64 30h1V34h-1zM65 31h1V34h-1zM66 31h1V34h-1zM67 30h1V34h-1zM68 31h1V34h-1zM69 30h1V34h-1zM70 30h1V34h-1zM71 31h1V34h-1zM72 31h1V34h-1zM73 30h1V34h-1zM74 30h1V34h-1zM75 30h1V34h-1zM76 30h1V34h-1zM77 31h1V34h-1zM78 31h1V34h-1zM79 30h1V34h-1zM80 30h1V34h-1zM81 31h1V34h-1zM82 31h1V34h-1zM83 31h1V34h-1zM84 29h1V34h-1zM85 31h1V34h-1zM86 30h1V34h-1zM87 31h1V34h-1zM88 31h1V34h-1zM89 30h1V34h-1zM90 30h1V34h-1zM91 31h1V34h-1zM92 31h1V34h-1zM93 31h1V34h-1zM94 31h1V34h-1zM95 30h1V34h-1zM96 31h1V34h-1zM97 30h1V34h-1zM98 31h1V34h-1zM99 31h1V34h-1zM100 30h1V34h-1zM101 31h1V34h-1zM102 28h1V34h-1zM103 31h1V34h-1zM104 31h1V34h-1zM105 31h1V34h-1zM106 30h1V34h-1zM107 31h1V34h-1zM108 31h1V34h-1zM109 31h1V34h-1zM110 31h1V34h-1zM111 29h1V34h-1zM112 31h1V34h-1zM113 30h1V34h-1zM114 31h1V34h-1zM115 31h1V34h-1zM116 31h1V34h-1zM117 30h1V34h-1zM118 30h1V34h-1zM119 31h1V34h-1zM120 30h1V34h-1zM121 31h1V34h-1zM122 31h1V34h-1zM123 29h1V34h-1zM124 31h1V34h-1zM125 31h1V34h-1zM126 31h1V34h-1zM127 30h1V34h-1zM128 31h1V34h-1zM129 31h1V34h-1zM130 30h1V34h-1zM131 31h1V34h-1zM132 30h1V34h-1zM133 30h1V34h-1zM134 30h1V34h-1zM135 31h1V34h-1zM136 29h1V34h-1zM137 31h1V34h-1zM138 31h1V34h-1zM139 31h1V34h-1zM140 30h1V34h-1zM141 30h1V34h-1zM142 31h1V34h-1zM143 30h1V34h-1zM144 31h1V34h-1zM145 31h1V34h-1zM146 30h1V34h-1zM147 30h1V34h-1zM148 30h1V34h-1zM149 30h1V34h-1zM150 30h1V34h-1zM151 31h1V34h-1zM152 31h1V34h-1zM153 28h1V34h-1zM154 31h1V34h-1zM155 30h1V34h-1zM156 31h1V34h-1zM157 31h1V34h-1zM158 31h1V34h-1zM159 31h1V34h-1zM160 30h1V34h-1zM161 30h1V34h-1zM162 31h1V34h-1zM163 31h1V34h-1zM164 31h1V34h-1zM165 31h1V34h-1zM166 29h1V34h-1zM167 31h1V34h-1zM168 30h1V34h-1zM169 30h1V34h-1zM170 30h1V34h-1zM171 29h1V34h-1zM172 31h1V34h-1zM173 31h1V34h-1zM174 31h1V34h-1zM175 30h1V34h-1zM176 31h1V34h-1zM177 31h1V34h-1zM178 31h1V34h-1zM179 31h1V34h-1zM180 31h1V34h-1zM181 31h1V34h-1zM182 30h1V34h-1zM183 30h1V34h-1zM184 31h1V34h-1zM185 31h1V34h-1zM186 30h1V34h-1zM187 30h1V34h-1zM188 30h1V34h-1zM189 31h1V34h-1zM190 31h1V34h-1zM191 30h1V34h-1zM192 31h1V34h-1zM193 30h1V34h-1zM194 30h1V34h-1zM195 31h1V34h-1zM196 31h1V34h-1zM197 30h1V34h-1zM198 31h1V34h-1zM199 30h1V34h-1zM200 30h1V34h-1zM201 31h1V34h-1zM202 31h1V34h-1zM203 30h1V34h-1zM204 30h1V34h-1zM205 30h1V34h-1zM206 30h1V34h-1zM207 31h1V34h-1zM208 30h1V34h-1zM209 30h1V34h-1zM210 30h1V34h-1zM211 31h1V34h-1zM212 30h1V34h-1zM213 31h1V34h-1zM214 30h1V34h-1zM215 30h1V34h-1zM216 31h1V34h-1zM217 31h1V34h-1zM218 29h1V34h-1zM219 30h1V34h-1zM220 31h1V34h-1zM221 31h1V34h-1zM222 31h1V34h-1zM223 31h1V34h-1zM224 30h1V34h-1zM225 30h1V34h-1zM226 31h1V34h-1zM227 31h1V34h-1zM228 30h1V34h-1zM229 31h1V34h-1zM230 31h1V34h-1zM231 31h1V34h-1zM232 31h1V34h-1zM233 30h1V34h-1zM234 30h1V34h-1zM235 31h1V34h-1zM236 31h1V34h-1zM237 28h1V34h-1zM238 31h1V34h-1zM239 31h1V34h-1zM240 31h1V34h-1zM241 31h1V34h-1zM242 31h1V34h-1zM243 30h1V34h-1zM244 31h1V34h-1zM245 30h1V34h-1zM246 31h1V34h-1zM247 31h1V34h-1zM248 31h1V34h-1zM249 31h1V34h-1zM250 31h1V34h-1zM251 31h1V34h-1zM252 30h1V34h-1zM253 31h1V34h-1zM254 31h1V34h-1zM255 31h1V34h-1zM256 31h1V34h-1zM257 30h1V34h-1zM258 31h1V34h-1zM259 31h1V34h-1zM260 30h1V34h-1zM261 31h1V34h-1zM262 31h1V34h-1zM263 31h1V34h-1zM264 30h1V34h-1zM265 31h1V34h-1zM266 30h1V34h-1zM267 30h1V34h-1zM268 31h1V34h-1zM269 31h1V34h-1zM270 30h1V34h-1zM271 29h1V34h-1zM272 31h1V34h-1zM273 30h1V34h-1zM274 31h1V34h-1zM275 31h1V34h-1zM276 30h1V34h-1zM277 31h1V34h-1zM278 31h1V34h-1zM279 31h1V34h-1zM280 31h1V34h-1zM281 31h1V34h-1zM282 31h1V34h-1zM283 31h1V34h-1zM284 31h1V34h-1zM285 31h1V34h-1zM286 31h1V34h-1zM287 31h1V34h-1zM288 30h1V34h-1zM289 31h1V34h-1zM290 31h1V34h-1zM291 30h1V34h-1zM292 31h1V34h-1zM293 31h1V34h-1zM294 31h1V34h-1zM295 31h1V34h-1zM296 30h1V34h-1zM297 30h1V34h-1zM298 30h1V34h-1zM299 31h1V34h-1zM300 31h1V34h-1zM301 31h1V34h-1zM302 31h1V34h-1zM303 17h1V34h-1zM304 31h1V34h-1zM305 31h1V34h-1zM306 31h1V34h-1zM307 30h1V34h-1zM308 31h1V34h-1zM309 31h1V34h-1zM310 31h1V34h-1zM311 29h1V34h-1zM312 31h1V34h-1zM313 31h1V34h-1zM314 28h1V34h-1zM315 30h1V34h-1zM316 30h1V34h-1zM317 31h1V34h-1zM318 31h1V34h-1zM319 30h1V34h-1zM320 31h1V34h-1zM321 31h1V34h-1zM322 31h1V34h-1zM323 31h1V34h-1zM324 31h1V34h-1zM325 30h1V34h-1zM326 31h1V34h-1zM327 31h1V34h-1zM328 30h1V34h-1zM329 31h1V34h-1zM330 31h1V34h-1zM331 31h1V34h-1zM332 31h1V34h-1zM333 31h1V34h-1zM334 31h1V34h-1zM335 31h1V34h-1zM336 31h1V34h-1zM337 31h1V34h-1zM338 31h1V34h-1zM339 31h1V34h-1zM340 31h1V34h-1zM341 31h1V34h-1zM342 31h1V34h-1zM343 28h1V34h-1zM344 31h1V34h-1zM345 30h1V34h-1zM346 30h1V34h-1zM347 31h1V34h-1zM348 31h1V34h-1zM349 31h1V34h-1zM350 31h1V34h-1zM351 31h1V34h-1zM352 30h1V34h-1zM353 31h1V34h-1zM354 29h1V34h-1zM355 30h1V34h-1zM356 31h1V34h-1zM357 31h1V34h-1zM358 30h1V34h-1zM359 31h1V34h-1zM360 31h1V34h-1zM361 30h1V34h-1zM362 31h1V34h-1zM363 31h1V34h-1zM364 30h1V34h-1zM365 31h1V34h-1zM366 31h1V34h-1zM367 31h1V34h-1zM368 31h1V34h-1zM369 30h1V34h-1zM370 30h1V34h-1zM371 31h1V34h-1zM372 31h1V34h-1zM373 31h1V34h-1zM374 31h1V34h-1zM375 30h1V34h-1zM376 30h1V34h-1zM377 30h1V34h-1zM378 29h1V34h-1zM379 30h1V34h-1zM380 31h1V34h-1zM381 30h1V34h-1zM382 31h1V34h-1zM383 31h1V34h-1zM384 31h1V34h-1zM385 30h1V34h-1zM386 30h1V34h-1zM387 30h1V34h-1zM388 31h1V34h-1zM389 30h1V34h-1zM390 31h1V34h-1zM391 30h1V34h-1zM392 31h1V34h-1zM393 30h1V34h-1zM394 31h1V34h-1zM395 31h1V34h-1zM396 31h1V34h-1zM397 30h1V34h-1zM398 31h1V34h-1zM399 29h1V34h-1zM400 3h1V34h-1z" fill="#008080"/><rect x="0" y="34" width="401" height="3" fill="#005f5f"/><rect x="400" y="0" width="1" height="3" fill="#f4e4dc"/></svg>
<div style="left:390px;top:100px;width:54px;height:15px;background:#262626;border-radius:3px"></div>
<div class="t" style="left:392.05px;top:100.67px;color:#dcdcdc;">16.00ms</div>
<div class="t" style="left:386.55px;top:135.67px;color:#c4c4c4;">1</div>
<div class="t" style="right:314.5px;text-align:right;top:135.67px;color:#c4c4c4;">998 [1]</div>
<div style="left:307px;top:154px;width:14px;height:13px;background:#2a2a2a;box-sizing:border-box;border:1px solid #1e1e1e;border-top-color:#111;border-radius:2px"></div>
<svg style="position:absolute;left:326px;top:154px" width="12" height="13"><path d="M3.2 5.8V3.6a2.3 2.3 0 0 1 4.6 0" fill="none" stroke="#c8c8c8" stroke-width="1.2"/><rect x="2.3" y="6.3" width="7.4" height="4.9" fill="none" stroke="#c8c8c8" stroke-width="1.2"/></svg>
<div class="t" style="left:343.47px;top:152.67px;color:#b8b8b8;">Pair Graph Selection</div>
<div style="left:724px;top:152px;width:65px;height:15px;background:#2c5d87;"></div>
<div class="t" style="left:724.47px;top:152.67px;color:#c8d8e8;">PlayerLoop</div>
<svg style="position:absolute;left:9.5px;top:191px" width="10" height="9"><polygon points="0,0.5 9.5,0.5 4.75,8.5" fill="#7f7f7f"/></svg>
<div class="t" style="left:21.16px;top:187.67px;color:#c4c4c4;font-weight:bold;">Filters</div>
<div class="t" style="left:8.47px;top:207.67px;color:#c4c4c4;">Remove :</div>
<div style="left:112px;top:206px;width:197px;height:16px;background:#515151;border-radius:3px;box-shadow:0 1px 0 #262626"></div>
<div class="t" style="left:114.47px;top:206.67px;color:#c4c4c4;">None</div>
<svg style="position:absolute;left:296px;top:212.0px" width="8" height="4"><polygon points="0,0 8,0 4.0,4" fill="#c4c4c4"/></svg>
<div class="t" style="left:8.47px;top:227.67px;color:#c4c4c4;">Name Filter :</div>
<div style="left:112px;top:226px;width:48px;height:16px;background:#515151;border-radius:3px;box-shadow:0 1px 0 #262626"></div>
<div class="t" style="left:115.48px;top:226.67px;color:#c4c4c4;">All</div>
<svg style="position:absolute;left:147px;top:232.0px" width="8" height="4"><polygon points="0,0 8,0 4.0,4" fill="#c4c4c4"/></svg>
<div style="left:164px;top:226px;width:232px;height:16px;background:#2a2a2a;box-sizing:border-box;border:1px solid #212121;border-radius:3px"></div>
<div class="t" style="left:399.97px;top:227.67px;color:#c4c4c4;">Exclude Names :</div>
<div style="left:504px;top:226px;width:48px;height:16px;background:#515151;border-radius:3px;box-shadow:0 1px 0 #262626"></div>
<div class="t" style="left:507.48px;top:226.67px;color:#c4c4c4;">Any</div>
<svg style="position:absolute;left:539px;top:232.0px" width="8" height="4"><polygon points="0,0 8,0 4.0,4" fill="#c4c4c4"/></svg>
<div style="left:557px;top:226px;width:232px;height:16px;background:#2a2a2a;box-sizing:border-box;border:1px solid #212121;border-radius:3px"></div>
<div class="t" style="left:9.22px;top:247.67px;color:#c4c4c4;">Thread :</div>
<div style="left:112px;top:246px;width:48px;height:17px;background:#585858;border-radius:3px;box-shadow:0 1px 0 #242424"></div>
<div class="t" style="left:-64.0px;width:400px;text-align:center;top:247.67px;color:#dedede;">Select</div>
<div style="left:164px;top:245px;width:72px;height:15px;background:#2c5d87;"></div>
<div class="t" style="left:163.97px;top:245.67px;color:#c8d8e8;">Main Thread</div>
<div class="t" style="left:8.47px;top:270.67px;color:#c4c4c4;">Depth Slice :</div>
<div style="left:112px;top:269px;width:48px;height:16px;background:#515151;border-radius:3px;box-shadow:0 1px 0 #262626"></div>
<div class="t" style="left:115.48px;top:269.67px;color:#c4c4c4;">All</div>
<svg style="position:absolute;left:147px;top:275.0px" width="8" height="4"><polygon points="0,0 8,0 4.0,4" fill="#c4c4c4"/></svg>
<div style="left:164px;top:270px;width:14px;height:14px;background:#2a2a2a;box-sizing:border-box;border:1px solid #1e1e1e;border-top-color:#111;border-radius:2px"></div>
<svg style="position:absolute;left:164px;top:270px" width="14" height="14"><path d="M3.5 7.2L6 9.8L10.8 4.2" fill="none" stroke="#e0e0e0" stroke-width="1.5"/></svg>
<div class="t" style="left:181.98px;top:270.67px;color:#c4c4c4;">Auto Depth (Diff: None)</div>
<div class="t" style="right:468px;text-align:right;top:270.67px;color:#c4c4c4;">Analysis Type :</div>
<div style="left:640px;top:269px;width:148px;height:16px;background:#515151;border-radius:3px;box-shadow:0 1px 0 #262626"></div>
<div class="t" style="left:643.22px;top:269.67px;color:#c4c4c4;">Total</div>
<svg style="position:absolute;left:775px;top:275.0px" width="8" height="4"><polygon points="0,0 8,0 4.0,4" fill="#c4c4c4"/></svg>
<div class="t" style="left:8.47px;top:292.67px;color:#c4c4c4;">Parent Marker :</div>
<div class="t" style="left:111.47px;top:292.67px;color:#c4c4c4;">None</div>
<div class="t" style="right:468px;text-align:right;top:292.67px;color:#c4c4c4;">Units :</div>
<div style="left:640px;top:291px;width:148px;height:16px;background:#515151;border-radius:3px;box-shadow:0 1px 0 #262626"></div>
<div class="t" style="left:642.47px;top:291.67px;color:#c4c4c4;">Milliseconds</div>
<svg style="position:absolute;left:775px;top:297.0px" width="8" height="4"><polygon points="0,0 8,0 4.0,4" fill="#c4c4c4"/></svg>
<div style="left:9px;top:313px;width:98px;height:17px;background:#585858;border-radius:3px;box-shadow:0 1px 0 #242424"></div>
<div class="t" style="left:-144px;width:400px;text-align:center;top:314.67px;color:#dedede;">Compare</div>
<div class="t" style="left:112.21px;top:313.67px;color:#c4c4c4;">404 of 575 markers</div>
<div class="t" style="left:228.88px;top:315.67px;color:#c4c4c4;">,</div>
<div class="t" style="left:241.05px;top:313.67px;color:#c4c4c4;">1 of 78 threads</div>
<div class="t" style="right:468px;text-align:right;top:314.67px;color:#c4c4c4;">Marker Columns :</div>
<div style="left:640px;top:313px;width:148px;height:16px;background:#515151;border-radius:3px;box-shadow:0 1px 0 #262626"></div>
<div class="t" style="left:643.22px;top:313.67px;color:#c4c4c4;">Time and Count</div>
<svg style="position:absolute;left:775px;top:319.0px" width="8" height="4"><polygon points="0,0 8,0 4.0,4" fill="#c4c4c4"/></svg>
<svg style="position:absolute;left:9.5px;top:348px" width="10" height="9"><polygon points="0,0.5 9.5,0.5 4.75,8.5" fill="#7f7f7f"/></svg>
<div class="t" style="left:21.86px;top:344.67px;color:#c4c4c4;font-weight:bold;">Top 10 markers on median frames</div>
<div style="left:12px;top:364px;width:48px;height:17px;background:#3f3f3f;border-radius:3px"></div>
<div class="t" style="left:-165.5px;width:400px;text-align:center;top:365.67px;color:#a0a0a0;">631</div>
<div style="left:12px;top:384px;width:48px;height:17px;background:#3f3f3f;border-radius:3px"></div>
<div class="t" style="left:-165.5px;width:400px;text-align:center;top:385.67px;color:#a0a0a0;">998</div>
<div style="left:63px;top:362px;width:665px;height:40px;background:#7c7c7c;"></div>
<div style="left:64px;top:363px;width:76px;height:18px;box-sizing:border-box;border:1px solid #111;background:#808080;"></div>
<div class="seg" style="left:65px;top:364px;width:74px;height:16px;background:#808080;color:#f0f0f0;text-align:center;line-height:18px">PlayerLoop</div>
<div class="seg" style="left:141px;top:364px;width:61px;height:16px;background:#70a4da;color:#101010;text-align:left;padding-left:1px;line-height:18px">DoRenderLoop</div>
<div class="seg" style="left:204px;top:364px;width:60px;height:16px;background:#70a4da;color:#101010;text-align:left;padding-left:1px;line-height:18px">Inl_UniversalRender</div>
<div class="seg" style="left:266px;top:364px;width:60px;height:16px;background:#70a4da;color:#101010;text-align:left;padding-left:1px;line-height:18px">Inl_RenderCameraStack</div>
<div class="seg" style="left:328px;top:364px;width:55px;height:16px;background:#70a4da;color:#101010;text-align:left;padding-left:1px;line-height:18px">EditorLoop</div>
<div class="seg" style="left:385px;top:364px;width:37px;height:16px;background:#70a4da;color:#101010;text-align:left;padding-left:1px;line-height:18px">Submit</div>
<div class="seg" style="left:424px;top:364px;width:33px;height:16px;background:#70a4da;color:#101010;text-align:left;padding-left:1px;line-height:18px">Render</div>
<div class="seg" style="left:459px;top:364px;width:30px;height:16px;background:#70a4da;color:#101010;text-align:left;padding-left:1px;line-height:18px">Exec</div>
<div class="seg" style="left:491px;top:364px;width:24px;height:16px;background:#70a4da;color:#101010;text-align:left;padding-left:1px;line-height:18px">Sch</div>
<div class="seg" style="left:517px;top:364px;width:18px;height:16px;background:#70a4da;color:#101010;text-align:left;padding-left:1px;line-height:18px"></div>
<div class="seg" style="left:537px;top:364px;width:191px;height:16px;background:#70a4da;color:#101010;text-align:left;padding-left:1px;line-height:18px"></div>
<div style="left:64px;top:383px;width:193px;height:18px;box-sizing:border-box;border:1px solid #111;background:#808080;"></div>
<div class="seg" style="left:65px;top:384px;width:191px;height:16px;background:#808080;color:#f0f0f0;text-align:center;line-height:18px">PlayerLoop</div>
<div class="seg" style="left:257px;top:384px;width:176px;height:16px;background:#ee8850;color:#101010;text-align:center;line-height:18px">Semaphore.WaitForSignal</div>
<div class="seg" style="left:436px;top:384px;width:176px;height:16px;background:#ee8850;color:#101010;text-align:left;padding-left:1px;line-height:18px">WaitForPresentOnGfxThread</div>
<div class="seg" style="left:614px;top:384px;width:15px;height:16px;background:#ee8850;color:#101010;text-align:left;padding-left:1px;line-height:18px"></div>
<div class="seg" style="left:631px;top:384px;width:10px;height:16px;background:#ee8850;color:#101010;text-align:left;padding-left:1px;line-height:18px"></div>
<div class="seg" style="left:643px;top:384px;width:9px;height:16px;background:#ee8850;color:#101010;text-align:left;padding-left:1px;line-height:18px"></div>
<div class="seg" style="left:654px;top:384px;width:10px;height:16px;background:#ee8850;color:#101010;text-align:left;padding-left:1px;line-height:18px"></div>
<div class="seg" style="left:666px;top:384px;width:4px;height:16px;background:#ee8850;color:#101010;text-align:left;padding-left:1px;line-height:18px"></div>
<div class="seg" style="left:672px;top:384px;width:3px;height:16px;background:#ee8850;color:#101010;text-align:left;padding-left:1px;line-height:18px"></div>
<div class="seg" style="left:677px;top:384px;width:4px;height:16px;background:#ee8850;color:#101010;text-align:left;padding-left:1px;line-height:18px"></div>
<div class="seg" style="left:683px;top:384px;width:45px;height:16px;background:#ee8850;color:#101010;text-align:left;padding-left:1px;line-height:18px"></div>
<div class="t" style="left:729.87px;top:364.67px;color:#c4c4c4;">25.4ms</div>
<div class="t" style="left:729.91px;top:385.67px;color:#c4c4c4;">96.7ms</div>
<div class="t" style="left:11.22px;top:405.67px;color:#c4c4c4;">(All depths)</div>
<div class="t" style="right:419px;text-align:right;top:405.67px;color:#c4c4c4;">Ratio :</div>
<div style="left:690px;top:405px;width:98px;height:16px;background:#515151;border-radius:3px;box-shadow:0 1px 0 #262626"></div>
<div class="t" style="left:692.47px;top:405.67px;color:#c4c4c4;">Normalized</div>
<svg style="position:absolute;left:775px;top:411.0px" width="8" height="4"><polygon points="0,0 8,0 4.0,4" fill="#c4c4c4"/></svg>
<svg style="position:absolute;left:2.5px;top:435px" width="10" height="9"><polygon points="0,0.5 9.5,0.5 4.75,8.5" fill="#7f7f7f"/></svg>
<div class="t" style="left:14.66px;top:431.67px;color:#c4c4c4;font-weight:bold;">Marker Comparison for currently selected range</div>
<div style="left:4px;top:449px;width:789px;height:355px;background:#232323;"></div>
<div style="left:5px;top:450px;width:787px;height:26px;background:#383838;"></div>
<div style="left:305px;top:455px;width:1px;height:18px;background:#555555;"></div>
<div style="left:358px;top:455px;width:1px;height:18px;background:#555555;"></div>
<div style="left:410px;top:455px;width:1px;height:18px;background:#555555;"></div>
<div style="left:462px;top:455px;width:1px;height:18px;background:#555555;"></div>
<div style="left:515px;top:455px;width:1px;height:18px;background:#555555;"></div>
<div style="left:567px;top:455px;width:1px;height:18px;background:#555555;"></div>
<div style="left:620px;top:455px;width:1px;height:18px;background:#555555;"></div>
<div style="left:673px;top:455px;width:1px;height:18px;background:#555555;"></div>
<div style="left:725px;top:455px;width:1px;height:18px;background:#555555;"></div>
<div style="left:778px;top:455px;width:1px;height:18px;background:#555555;"></div>
<div class="t" style="left:8.47px;top:459.67px;width:290px;overflow:hidden;color:#a8a8a8">Marker Name</div>
<div class="t" style="left:308.47px;top:459.67px;width:45px;overflow:hidden;color:#a8a8a8">Left Median</div>
<div class="t" style="left:361.88px;top:459.67px;width:45px;overflow:hidden;color:#a8a8a8">&lt;</div>
<div class="t" style="left:413.88px;top:459.67px;width:45px;overflow:hidden;color:#a8a8a8">&gt;</div>
<div class="t" style="left:465.97px;top:459.67px;width:46px;overflow:hidden;color:#a8a8a8">Right Median</div>
<div class="t" style="left:518.97px;top:459.67px;width:45px;overflow:hidden;color:#a8a8a8">Diff</div>
<div class="t" style="left:571.98px;top:459.67px;width:46px;overflow:hidden;color:#a8a8a8">Abs Diff</div>
<svg style="position:absolute;left:574px;top:453px" width="6" height="4"><polygon points="0,0 6,0 3.0,4" fill="#c8c8c8"/></svg>
<div class="t" style="left:624.37px;top:459.67px;width:46px;overflow:hidden;color:#a8a8a8">Count Left</div>
<div class="t" style="left:677.37px;top:459.67px;width:46px;overflow:hidden;color:#a8a8a8">Count Right</div>
<div class="t" style="left:729.37px;top:459.67px;width:46px;overflow:hidden;color:#a8a8a8">Count Delta</div>
<div style="left:5px;top:477px;width:774px;height:20px;background:#3c3c3c;"></div>
<div style="left:5px;top:497px;width:774px;height:20px;background:#363636;"></div>
<div style="left:5px;top:517px;width:774px;height:20px;background:#4d4d4d;"></div>
<div style="left:5px;top:537px;width:774px;height:20px;background:#363636;"></div>
<div style="left:5px;top:557px;width:774px;height:20px;background:#3c3c3c;"></div>
<div style="left:5px;top:577px;width:774px;height:20px;background:#363636;"></div>
<div style="left:5px;top:597px;width:774px;height:20px;background:#3c3c3c;"></div>
<div style="left:5px;top:617px;width:774px;height:20px;background:#363636;"></div>
<div style="left:5px;top:637px;width:774px;height:20px;background:#3c3c3c;"></div>
<div style="left:5px;top:657px;width:774px;height:20px;background:#363636;"></div>
<div style="left:5px;top:677px;width:774px;height:20px;background:#3c3c3c;"></div>
<div style="left:5px;top:697px;width:774px;height:20px;background:#363636;"></div>
<div style="left:5px;top:717px;width:774px;height:20px;background:#3c3c3c;"></div>
<div style="left:5px;top:737px;width:774px;height:20px;background:#363636;"></div>
<div style="left:5px;top:757px;width:774px;height:20px;background:#3c3c3c;"></div>
<div style="left:5px;top:777px;width:774px;height:20px;background:#363636;"></div>
<div style="left:5px;top:797px;width:774px;height:6px;background:#3c3c3c;"></div>
<div style="left:779px;top:477px;width:13px;height:326px;background:#343434;"></div>
<div class="t" style="left:5.37px;top:480.67px;width:299px;overflow:hidden;color:#c4c4c4">Gfx.WaitForPresentOnGfxThread</div>
<div class="t" style="left:309.01px;top:480.67px;color:#c4c4c4;">0.00</div>
<div class="t" style="left:466.37px;top:480.67px;color:#c4c4c4;">25.93</div>
<div class="t" style="left:519.87px;top:480.67px;color:#c4c4c4;">25.93</div>
<div class="t" style="left:571.37px;top:480.67px;color:#c4c4c4;">25.93</div>
<div class="t" style="left:624.55px;top:480.67px;color:#c4c4c4;">1</div>
<div class="t" style="left:677.55px;top:480.67px;color:#c4c4c4;">1</div>
<div class="t" style="left:730.01px;top:480.67px;color:#c4c4c4;">0</div>
<div style="left:413px;top:479px;width:47px;height:17px;background:#ee8850;"></div>
<div class="t" style="left:5.43px;top:500.67px;width:299px;overflow:hidden;color:#c4c4c4">Semaphore.WaitForSignal</div>
<div class="t" style="left:309.01px;top:500.67px;color:#c4c4c4;">0.04</div>
<div class="t" style="left:466.37px;top:500.67px;color:#c4c4c4;">25.94</div>
<div class="t" style="left:519.87px;top:500.67px;color:#c4c4c4;">25.90</div>
<div class="t" style="left:571.37px;top:500.67px;color:#c4c4c4;">25.90</div>
<div class="t" style="left:624.87px;top:500.67px;color:#c4c4c4;">2</div>
<div class="t" style="left:677.87px;top:500.67px;color:#c4c4c4;">2</div>
<div class="t" style="left:730.01px;top:500.67px;color:#c4c4c4;">0</div>
<div style="left:413px;top:499px;width:47px;height:17px;background:#ee8850;"></div>
<div class="t" style="left:4.97px;top:520.67px;width:299px;overflow:hidden;color:#c4c4c4">PlayerLoop</div>
<div class="t" style="left:308.87px;top:520.67px;color:#c4c4c4;">2.91</div>
<div class="t" style="left:466.37px;top:520.67px;color:#c4c4c4;">27.97</div>
<div class="t" style="left:519.87px;top:520.67px;color:#c4c4c4;">25.06</div>
<div class="t" style="left:571.37px;top:520.67px;color:#c4c4c4;">25.06</div>
<div class="t" style="left:625.02px;top:520.67px;color:#c4c4c4;">3</div>
<div class="t" style="left:678.02px;top:520.67px;color:#c4c4c4;">3</div>
<div class="t" style="left:730.01px;top:520.67px;color:#c4c4c4;">0</div>
<div style="left:413px;top:519px;width:45px;height:17px;background:#ee8850;"></div>
<div class="t" style="left:5.04px;top:540.67px;width:299px;overflow:hidden;color:#c4c4c4">UnityEngine.CoreModule.dll!UnityEngine.Rendering::RenderPipelineManager.DoRenderLoop_Internal()</div>
<div class="t" style="left:308.87px;top:540.67px;color:#c4c4c4;">2.40</div>
<div class="t" style="left:466.05px;top:540.67px;color:#c4c4c4;">1.69</div>
<div class="t" style="left:519.94px;top:540.67px;color:#c4c4c4;">-0.70</div>
<div class="t" style="left:571.51px;top:540.67px;color:#c4c4c4;">0.70</div>
<div class="t" style="left:624.55px;top:540.67px;color:#c4c4c4;">1</div>
<div class="t" style="left:677.55px;top:540.67px;color:#c4c4c4;">1</div>
<div class="t" style="left:730.01px;top:540.67px;color:#c4c4c4;">0</div>
<div style="left:406px;top:539px;width:1px;height:17px;background:#70a4da;"></div>
<div class="t" style="left:4.85px;top:560.67px;width:299px;overflow:hidden;color:#c4c4c4">Inl_UniversalRenderTotal</div>
<div class="t" style="left:308.87px;top:560.67px;color:#c4c4c4;">2.39</div>
<div class="t" style="left:466.05px;top:560.67px;color:#c4c4c4;">1.69</div>
<div class="t" style="left:519.94px;top:560.67px;color:#c4c4c4;">-0.70</div>
<div class="t" style="left:571.51px;top:560.67px;color:#c4c4c4;">0.70</div>
<div class="t" style="left:624.55px;top:560.67px;color:#c4c4c4;">1</div>
<div class="t" style="left:677.55px;top:560.67px;color:#c4c4c4;">1</div>
<div class="t" style="left:730.01px;top:560.67px;color:#c4c4c4;">0</div>
<div style="left:406px;top:559px;width:1px;height:17px;background:#70a4da;"></div>
<div class="t" style="left:4.85px;top:580.67px;width:299px;overflow:hidden;color:#c4c4c4">Inl_RenderCameraStack</div>
<div class="t" style="left:308.87px;top:580.67px;color:#c4c4c4;">2.37</div>
<div class="t" style="left:466.05px;top:580.67px;color:#c4c4c4;">1.67</div>
<div class="t" style="left:519.94px;top:580.67px;color:#c4c4c4;">-0.70</div>
<div class="t" style="left:571.51px;top:580.67px;color:#c4c4c4;">0.70</div>
<div class="t" style="left:624.55px;top:580.67px;color:#c4c4c4;">1</div>
<div class="t" style="left:677.55px;top:580.67px;color:#c4c4c4;">1</div>
<div class="t" style="left:730.01px;top:580.67px;color:#c4c4c4;">0</div>
<div style="left:406px;top:579px;width:1px;height:17px;background:#70a4da;"></div>
<div class="t" style="left:4.85px;top:600.67px;width:299px;overflow:hidden;color:#c4c4c4">Inl_ScriptableRenderContext.Submit</div>
<div class="t" style="left:308.55px;top:600.67px;color:#c4c4c4;">1.51</div>
<div class="t" style="left:466.51px;top:600.67px;color:#c4c4c4;">0.92</div>
<div class="t" style="left:519.94px;top:600.67px;color:#c4c4c4;">-0.60</div>
<div class="t" style="left:571.51px;top:600.67px;color:#c4c4c4;">0.60</div>
<div class="t" style="left:624.55px;top:600.67px;color:#c4c4c4;">1</div>
<div class="t" style="left:677.55px;top:600.67px;color:#c4c4c4;">1</div>
<div class="t" style="left:730.01px;top:600.67px;color:#c4c4c4;">0</div>
<div style="left:406px;top:599px;width:1px;height:17px;background:#70a4da;"></div>
<div class="t" style="left:5.04px;top:620.67px;width:299px;overflow:hidden;color:#c4c4c4">UniversalRenderPipeline.RenderSingleCamera: Main Camera</div>
<div class="t" style="left:308.55px;top:620.67px;color:#c4c4c4;">1.33</div>
<div class="t" style="left:466.51px;top:620.67px;color:#c4c4c4;">0.79</div>
<div class="t" style="left:519.94px;top:620.67px;color:#c4c4c4;">-0.53</div>
<div class="t" style="left:571.51px;top:620.67px;color:#c4c4c4;">0.53</div>
<div class="t" style="left:624.55px;top:620.67px;color:#c4c4c4;">1</div>
<div class="t" style="left:677.55px;top:620.67px;color:#c4c4c4;">1</div>
<div class="t" style="left:730.01px;top:620.67px;color:#c4c4c4;">0</div>
<div style="left:406px;top:619px;width:1px;height:17px;background:#70a4da;"></div>
<div class="t" style="left:5.43px;top:640.67px;width:299px;overflow:hidden;color:#c4c4c4">ScriptableRenderer.Execute: UniversalRenderer</div>
<div class="t" style="left:308.55px;top:640.67px;color:#c4c4c4;">1.24</div>
<div class="t" style="left:466.51px;top:640.67px;color:#c4c4c4;">0.77</div>
<div class="t" style="left:519.94px;top:640.67px;color:#c4c4c4;">-0.47</div>
<div class="t" style="left:571.51px;top:640.67px;color:#c4c4c4;">0.47</div>
<div class="t" style="left:624.55px;top:640.67px;color:#c4c4c4;">1</div>
<div class="t" style="left:677.55px;top:640.67px;color:#c4c4c4;">1</div>
<div class="t" style="left:730.01px;top:640.67px;color:#c4c4c4;">0</div>
<div style="left:406px;top:639px;width:1px;height:17px;background:#70a4da;"></div>
<div class="t" style="left:4.97px;top:660.67px;width:299px;overflow:hidden;color:#c4c4c4">RenderLoop.ScheduleDraw</div>
<div class="t" style="left:309.01px;top:660.67px;color:#c4c4c4;">0.99</div>
<div class="t" style="left:466.51px;top:660.67px;color:#c4c4c4;">0.69</div>
<div class="t" style="left:519.94px;top:660.67px;color:#c4c4c4;">-0.31</div>
<div class="t" style="left:571.51px;top:660.67px;color:#c4c4c4;">0.31</div>
<div class="t" style="left:624.87px;top:660.67px;color:#c4c4c4;">6</div>
<div class="t" style="left:677.87px;top:660.67px;color:#c4c4c4;">6</div>
<div class="t" style="left:730.01px;top:660.67px;color:#c4c4c4;">0</div>
<div style="left:406px;top:659px;width:1px;height:17px;background:#70a4da;"></div>
<div class="t" style="left:4.97px;top:680.67px;width:299px;overflow:hidden;color:#c4c4c4">EditorLoop</div>
<div class="t" style="left:308.87px;top:680.67px;color:#c4c4c4;">2.16</div>
<div class="t" style="left:466.37px;top:680.67px;color:#c4c4c4;">2.44</div>
<div class="t" style="left:520.01px;top:680.67px;color:#c4c4c4;">0.28</div>
<div class="t" style="left:571.51px;top:680.67px;color:#c4c4c4;">0.28</div>
<div class="t" style="left:625.02px;top:680.67px;color:#c4c4c4;">3</div>
<div class="t" style="left:678.02px;top:680.67px;color:#c4c4c4;">3</div>
<div class="t" style="left:730.01px;top:680.67px;color:#c4c4c4;">0</div>
<div style="left:413px;top:679px;width:1px;height:17px;background:#ee8850;"></div>
<div class="t" style="left:4.97px;top:700.67px;width:299px;overflow:hidden;color:#c4c4c4">DrawOpaqueObjects</div>
<div class="t" style="left:309.01px;top:700.67px;color:#c4c4c4;">0.48</div>
<div class="t" style="left:466.51px;top:700.67px;color:#c4c4c4;">0.32</div>
<div class="t" style="left:519.94px;top:700.67px;color:#c4c4c4;">-0.15</div>
<div class="t" style="left:571.51px;top:700.67px;color:#c4c4c4;">0.15</div>
<div class="t" style="left:624.55px;top:700.67px;color:#c4c4c4;">1</div>
<div class="t" style="left:677.55px;top:700.67px;color:#c4c4c4;">1</div>
<div class="t" style="left:730.01px;top:700.67px;color:#c4c4c4;">0</div>
<div style="left:406px;top:699px;width:1px;height:17px;background:#70a4da;"></div>
<div class="t" style="left:4.97px;top:720.67px;width:299px;overflow:hidden;color:#c4c4c4">RenderLoop.DrawSRPBatcher</div>
<div class="t" style="left:309.01px;top:720.67px;color:#c4c4c4;">0.48</div>
<div class="t" style="left:466.51px;top:720.67px;color:#c4c4c4;">0.33</div>
<div class="t" style="left:519.94px;top:720.67px;color:#c4c4c4;">-0.15</div>
<div class="t" style="left:571.51px;top:720.67px;color:#c4c4c4;">0.15</div>
<div class="t" style="left:624.87px;top:720.67px;color:#c4c4c4;">2</div>
<div class="t" style="left:677.87px;top:720.67px;color:#c4c4c4;">2</div>
<div class="t" style="left:730.01px;top:720.67px;color:#c4c4c4;">0</div>
<div style="left:406px;top:719px;width:1px;height:17px;background:#70a4da;"></div>
<div class="t" style="left:5.43px;top:740.67px;width:299px;overflow:hidden;color:#c4c4c4">SRPBRender.ApplyShader</div>
<div class="t" style="left:309.01px;top:740.67px;color:#c4c4c4;">0.39</div>
<div class="t" style="left:466.51px;top:740.67px;color:#c4c4c4;">0.27</div>
<div class="t" style="left:519.94px;top:740.67px;color:#c4c4c4;">-0.12</div>
<div class="t" style="left:571.51px;top:740.67px;color:#c4c4c4;">0.12</div>
<div class="t" style="left:624.87px;top:740.67px;color:#c4c4c4;">23</div>
<div class="t" style="left:677.87px;top:740.67px;color:#c4c4c4;">23</div>
<div class="t" style="left:730.01px;top:740.67px;color:#c4c4c4;">0</div>
<div style="left:406px;top:739px;width:1px;height:17px;background:#70a4da;"></div>
<div class="t" style="left:5.43px;top:760.67px;width:299px;overflow:hidden;color:#c4c4c4">Shadows.ExecuteDrawShadows</div>
<div class="t" style="left:309.01px;top:760.67px;color:#c4c4c4;">0.27</div>
<div class="t" style="left:466.51px;top:760.67px;color:#c4c4c4;">0.17</div>
<div class="t" style="left:519.94px;top:760.67px;color:#c4c4c4;">-0.11</div>
<div class="t" style="left:571.51px;top:760.67px;color:#c4c4c4;">0.11</div>
<div class="t" style="left:625.02px;top:760.67px;color:#c4c4c4;">3</div>
<div class="t" style="left:678.02px;top:760.67px;color:#c4c4c4;">3</div>
<div class="t" style="left:730.01px;top:760.67px;color:#c4c4c4;">0</div>
<div style="left:406px;top:759px;width:1px;height:17px;background:#70a4da;"></div>
<div class="t" style="left:4.85px;top:780.67px;width:299px;overflow:hidden;color:#c4c4c4">Inl_UniversalRenderPipeline.RenderSingleCamera: Main Camera</div>
<div class="t" style="left:309.01px;top:780.67px;color:#c4c4c4;">0.76</div>
<div class="t" style="left:466.51px;top:780.67px;color:#c4c4c4;">0.66</div>
<div class="t" style="left:519.94px;top:780.67px;color:#c4c4c4;">-0.11</div>
<div class="t" style="left:571.51px;top:780.67px;color:#c4c4c4;">0.11</div>
<div class="t" style="left:624.55px;top:780.67px;color:#c4c4c4;">1</div>
<div class="t" style="left:677.55px;top:780.67px;color:#c4c4c4;">1</div>
<div class="t" style="left:730.01px;top:780.67px;color:#c4c4c4;">0</div>
<div style="left:406px;top:779px;width:1px;height:17px;background:#70a4da;"></div>
<div style="left:406px;top:799px;width:1px;height:4px;background:#70a4da;"></div>
<div style="left:782px;top:483px;width:0;height:0;border-left:4.5px solid transparent;border-right:4.5px solid transparent;border-bottom:4px solid #d0d0d0;background:none"></div>
<div style="left:781px;top:493px;width:10px;height:29px;background:#616161;border-radius:5px"></div>
<svg style="position:absolute;left:782px;top:793px" width="8" height="4"><polygon points="0,0 8,0 4.0,4" fill="#d0d0d0"/></svg>
<div style="left:797px;top:43px;width:290px;height:343px;background:#323232;"></div>
<div style="left:797px;top:390px;width:290px;height:24px;background:#323232;"></div>
<div style="left:797px;top:418px;width:290px;height:386px;background:#323232;"></div>
<svg style="position:absolute;left:802px;top:52px" width="10" height="9"><polygon points="0,0.5 9.5,0.5 4.75,8.5" fill="#7f7f7f"/></svg>
<div class="t" style="left:813.66px;top:49.67px;color:#c4c4c4;font-weight:bold;">Frame Summary</div>
<div class="t" style="left:906.47px;top:68.67px;color:#c4c4c4;">Left</div>
<div class="t" style="left:961.47px;top:68.67px;color:#c4c4c4;">Right</div>
<div class="t" style="left:1016.47px;top:68.67px;color:#c4c4c4;">Diff</div>
<div class="t" style="left:803.47px;top:88.67px;color:#c4c4c4;">Frame Count</div>
<div class="t" style="left:906.55px;top:88.67px;color:#c4c4c4;">1</div>
<div class="t" style="left:961.55px;top:88.67px;color:#c4c4c4;">1</div>
<div class="t" style="left:1017.01px;top:88.67px;color:#c4c4c4;">0</div>
<div class="t" style="left:803.93px;top:108.67px;color:#c4c4c4;">Start</div>
<div class="t" style="left:906.87px;top:108.67px;color:#c4c4c4;">631</div>
<div class="t" style="left:961.91px;top:108.67px;color:#c4c4c4;">998</div>
<div class="t" style="left:803.47px;top:128.67px;color:#c4c4c4;">End</div>
<div class="t" style="left:906.67px;top:168.67px;color:#c4c4c4;">ms</div>
<div class="t" style="left:961.67px;top:168.67px;color:#c4c4c4;">ms</div>
<div class="t" style="left:1016.67px;top:168.67px;color:#c4c4c4;">ms</div>
<div class="t" style="left:803.47px;top:188.67px;color:#c4c4c4;">Max</div>
<div class="t" style="left:907.00px;top:188.67px;color:#c4c4c4;">5.39</div>
<div class="t" style="left:962.02px;top:188.67px;color:#c4c4c4;">30.75</div>
<div class="t" style="left:1016.87px;top:188.67px;color:#c4c4c4;">25.35</div>
<div class="t" style="left:803.54px;top:208.67px;color:#c4c4c4;">Upper Quartile</div>
<div class="t" style="left:907.00px;top:208.67px;color:#c4c4c4;">5.39</div>
<div class="t" style="left:962.02px;top:208.67px;color:#c4c4c4;">30.75</div>
<div class="t" style="left:1016.87px;top:208.67px;color:#c4c4c4;">25.35</div>
<div class="t" style="left:803.47px;top:228.67px;color:#c4c4c4;">Median</div>
<div class="t" style="left:907.00px;top:228.67px;color:#c4c4c4;">5.39</div>
<div class="t" style="left:962.02px;top:228.67px;color:#c4c4c4;">30.75</div>
<div class="t" style="left:1016.87px;top:228.67px;color:#c4c4c4;">25.35</div>
<div class="t" style="left:803.47px;top:248.67px;color:#c4c4c4;">Mean</div>
<div class="t" style="left:907.00px;top:248.67px;color:#c4c4c4;">5.39</div>
<div class="t" style="left:962.02px;top:248.67px;color:#c4c4c4;">30.75</div>
<div class="t" style="left:1016.87px;top:248.67px;color:#c4c4c4;">25.35</div>
<div class="t" style="left:803.47px;top:268.67px;color:#c4c4c4;">Lower Quartile</div>
<div class="t" style="left:907.00px;top:268.67px;color:#c4c4c4;">5.39</div>
<div class="t" style="left:962.02px;top:268.67px;color:#c4c4c4;">30.75</div>
<div class="t" style="left:1016.87px;top:268.67px;color:#c4c4c4;">25.35</div>
<div class="t" style="left:803.47px;top:288.67px;color:#c4c4c4;">Min</div>
<div class="t" style="left:907.00px;top:288.67px;color:#c4c4c4;">5.39</div>
<div class="t" style="left:962.02px;top:288.67px;color:#c4c4c4;">30.75</div>
<div class="t" style="left:1016.87px;top:288.67px;color:#c4c4c4;">25.35</div>
<div style="left:801px;top:321px;width:6px;height:40px;background:#808080;"></div>
<div style="left:809px;top:321px;width:6px;height:40px;background:#808080;"></div>
<div style="left:817px;top:321px;width:5px;height:40px;background:#808080;"></div>
<div style="left:824px;top:321px;width:6px;height:40px;background:#70a4da;"></div>
<div style="left:832px;top:321px;width:6px;height:40px;background:#808080;"></div>
<div style="left:840px;top:321px;width:5px;height:40px;background:#808080;"></div>
<div style="left:847px;top:321px;width:6px;height:40px;background:#808080;"></div>
<div style="left:855px;top:321px;width:6px;height:40px;background:#808080;"></div>
<div style="left:863px;top:321px;width:6px;height:40px;background:#808080;"></div>
<div style="left:871px;top:321px;width:6px;height:40px;background:#808080;"></div>
<div style="left:879px;top:321px;width:5px;height:40px;background:#808080;"></div>
<div style="left:886px;top:321px;width:6px;height:40px;background:#808080;"></div>
<div style="left:894px;top:321px;width:6px;height:40px;background:#808080;"></div>
<div style="left:902px;top:321px;width:5px;height:40px;background:#808080;"></div>
<div style="left:909px;top:321px;width:6px;height:40px;background:#808080;"></div>
<div style="left:917px;top:321px;width:6px;height:40px;background:#808080;"></div>
<div style="left:925px;top:321px;width:6px;height:40px;background:#808080;"></div>
<div style="left:933px;top:321px;width:6px;height:40px;background:#808080;"></div>
<div style="left:941px;top:321px;width:5px;height:40px;background:#808080;"></div>
<div style="left:948px;top:321px;width:6px;height:40px;background:#ee8850;"></div>
<div style="left:963px;top:321px;width:46px;height:40px;background:#666666;"></div>
<div style="left:992px;top:320px;width:11px;height:2px;background:#f4c8b4;"></div>
<div style="left:969px;top:353px;width:11px;height:2px;background:#c8dcf0;"></div>
<div class="t" style="left:1014.02px;top:319.67px;color:#c4c4c4;">30.747</div>
<div class="t" style="left:1014.01px;top:348.67px;color:#c4c4c4;">0</div>
<div class="t" style="left:800.01px;top:365.67px;color:#c4c4c4;">0</div>
<div class="t" style="right:148px;text-align:right;top:365.67px;color:#c4c4c4;">30.747</div>
<div style="left:803px;top:398px;width:0;height:0;border-top:4.5px solid transparent;border-bottom:4.5px solid transparent;border-left:8px solid #808080;background:none"></div>
<div class="t" style="left:814.36px;top:395.67px;color:#c4c4c4;font-weight:bold;">Thread Summary</div>
<svg style="position:absolute;left:802px;top:427px" width="10" height="9"><polygon points="0,0.5 9.5,0.5 4.75,8.5" fill="#7f7f7f"/></svg>
<div class="t" style="left:813.66px;top:423.67px;color:#c4c4c4;font-weight:bold;">Marker Summary</div>
<div style="left:1071px;top:439px;width:13px;height:365px;background:#2e2e2e;"></div>
<div style="left:1074px;top:445px;width:0;height:0;border-left:4.0px solid transparent;border-right:4.0px solid transparent;border-bottom:4px solid #d0d0d0;background:none"></div>
<div style="left:1073px;top:455px;width:10px;height:230px;background:#616161;border-radius:5px"></div>
<svg style="position:absolute;left:1074px;top:793px" width="8" height="4"><polygon points="0,0 8,0 4.0,4" fill="#d0d0d0"/></svg>
<div class="t" style="left:803.47px;top:443.67px;color:#c4c4c4;">PlayerLoop</div>
<div class="t" style="left:803.47px;top:463.67px;color:#c4c4c4;">Mean frame contribution</div>
<div class="t" style="left:906.47px;top:483.67px;color:#c4c4c4;">Left</div>
<div class="t" style="left:961.47px;top:483.67px;color:#c4c4c4;">Right</div>
<div class="t" style="left:1016.47px;top:483.67px;color:#c4c4c4;">Diff</div>
<div style="left:804px;top:503px;width:100px;height:13px;background:#808080;"></div>
<div style="left:804px;top:503px;width:54px;height:6px;background:#70a4da;"></div>
<div style="left:804px;top:509px;width:91px;height:7px;background:#ee8850;"></div>
<div class="t" style="left:909.00px;top:503.67px;color:#c4c4c4;">53.94%</div>
<div class="t" style="left:963.91px;top:503.67px;color:#c4c4c4;">90.96%</div>
<div class="t" style="left:1018.52px;top:503.67px;color:#c4c4c4;">37.02%</div>
<div class="t" style="left:803.47px;top:527.67px;color:#c4c4c4;">First frame</div>
<div style="left:907px;top:526px;width:48px;height:17px;background:#3f3f3f;border-radius:3px"></div>
<div class="t" style="left:730px;width:400px;text-align:center;top:527.67px;color:#a0a0a0;">631</div>
<div style="left:960px;top:526px;width:48px;height:17px;background:#3f3f3f;border-radius:3px"></div>
<div class="t" style="left:783px;width:400px;text-align:center;top:527.67px;color:#a0a0a0;">998</div>
<div class="t" style="left:804.22px;top:548.67px;color:#c4c4c4;">Top</div>
<div style="left:837px;top:547px;width:38px;height:16px;background:#515151;border-radius:3px;box-shadow:0 1px 0 #262626"></div>
<div class="t" style="left:840.02px;top:547.67px;color:#c4c4c4;">3</div>
<svg style="position:absolute;left:862px;top:553.0px" width="8" height="4"><polygon points="0,0 8,0 4.0,4" fill="#c4c4c4"/></svg>
<div class="t" style="left:882.69px;top:548.67px;color:#c4c4c4;">by frame costs</div>
<div style="left:804px;top:568px;width:100px;height:13px;background:#808080;"></div>
<div style="left:804px;top:568px;width:10px;height:6px;background:#70a4da;"></div>
<div style="left:804px;top:574px;width:100px;height:7px;background:#ee8850;"></div>
<div class="t" style="left:908.87px;top:568.67px;color:#c4c4c4;">2.91</div>
<div class="t" style="left:963.87px;top:568.67px;color:#c4c4c4;">27.97</div>
<div class="t" style="left:1018.37px;top:568.67px;color:#c4c4c4;">25.06</div>
<div style="left:801px;top:643px;width:6px;height:100px;background:#70a4da;"></div>
<div style="left:809px;top:643px;width:6px;height:100px;background:#808080;"></div>
<div style="left:817px;top:643px;width:5px;height:100px;background:#808080;"></div>
<div style="left:824px;top:643px;width:6px;height:100px;background:#808080;"></div>
<div style="left:832px;top:643px;width:6px;height:100px;background:#808080;"></div>
<div style="left:840px;top:643px;width:5px;height:100px;background:#808080;"></div>
<div style="left:847px;top:643px;width:6px;height:100px;background:#808080;"></div>
<div style="left:855px;top:643px;width:6px;height:100px;background:#808080;"></div>
<div style="left:863px;top:643px;width:6px;height:100px;background:#808080;"></div>
<div style="left:871px;top:643px;width:6px;height:100px;background:#808080;"></div>
<div style="left:879px;top:643px;width:5px;height:100px;background:#808080;"></div>
<div style="left:886px;top:643px;width:6px;height:100px;background:#808080;"></div>
<div style="left:894px;top:643px;width:6px;height:100px;background:#808080;"></div>
<div style="left:902px;top:643px;width:5px;height:100px;background:#808080;"></div>
<div style="left:909px;top:643px;width:6px;height:100px;background:#808080;"></div>
<div style="left:917px;top:643px;width:6px;height:100px;background:#808080;"></div>
<div style="left:925px;top:643px;width:6px;height:100px;background:#808080;"></div>
<div style="left:933px;top:643px;width:6px;height:100px;background:#808080;"></div>
<div style="left:941px;top:643px;width:5px;height:100px;background:#808080;"></div>
<div style="left:948px;top:643px;width:6px;height:100px;background:#ee8850;"></div>
<div style="left:963px;top:643px;width:46px;height:100px;background:#666666;"></div>
<div style="left:992px;top:642px;width:11px;height:2px;background:#f4c8b4;"></div>
<div style="left:969px;top:741px;width:11px;height:2px;background:#c8dcf0;"></div>
<div class="t" style="left:1013.87px;top:641.67px;color:#c4c4c4;">27.966</div>
<div class="t" style="left:1013.87px;top:730.67px;color:#c4c4c4;">2.9086</div>
<div class="t" style="left:799.87px;top:747.67px;color:#c4c4c4;">2.9086</div>
<div class="t" style="right:148px;text-align:right;top:747.67px;color:#c4c4c4;">27.966</div>
<div class="t" style="left:906.67px;top:784.67px;color:#c4c4c4;">ms</div>
<div class="t" style="left:961.67px;top:784.67px;color:#c4c4c4;">ms</div>
<div class="t" style="left:1016.67px;top:784.67px;color:#c4c4c4;">ms</div>
</body></html>
